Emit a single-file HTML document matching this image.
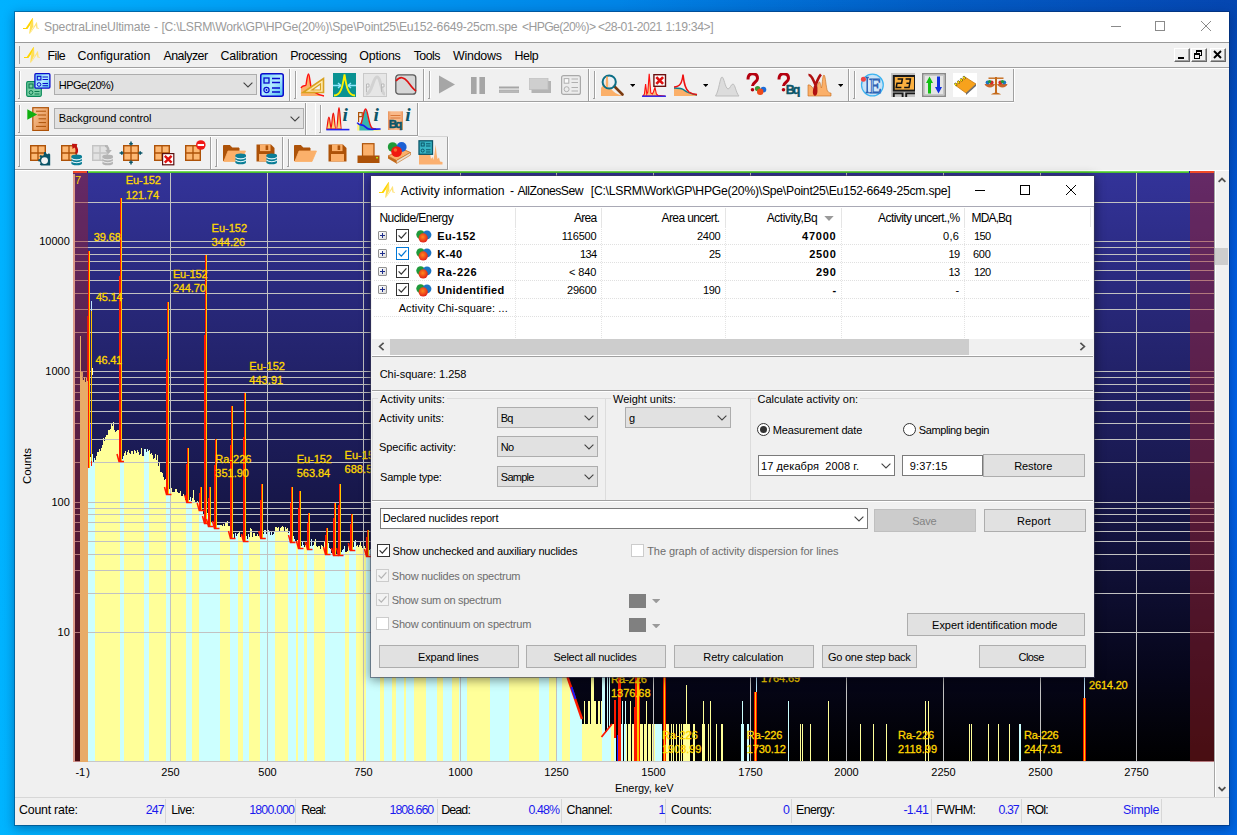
<!DOCTYPE html><html><head><meta charset="utf-8"><title>SpectraLineUltimate</title><style>
html,body{margin:0;padding:0;}
body{width:1237px;height:835px;overflow:hidden;position:relative;font-family:"Liberation Sans",sans-serif;
 background:linear-gradient(90deg,#00b2ff 0%,#009af2 25%,#0084e6 50%,#006cdc 75%,#005ce0 100%);}
.t{position:absolute;white-space:pre;line-height:1;}
.a{position:absolute;box-sizing:border-box;}
#win{position:absolute;left:15px;top:12px;width:1214px;height:813px;background:#f0f0f0;box-shadow:0 0 0 1px rgba(0,30,70,.38),0 3px 10px 1px rgba(0,20,70,.36);}
.btn{position:absolute;box-sizing:border-box;background:#e1e1e1;border:1px solid #adadad;}
.cmb{position:absolute;box-sizing:border-box;background:#e1e1e1;border:1px solid #adadad;}
.edit{position:absolute;box-sizing:border-box;background:#fff;border:1px solid #7a7a7a;}
.hl{position:absolute;height:1px;}
.vl{position:absolute;width:1px;}
</style></head><body>
<div class="a" style="left:0;top:0;width:1237px;height:835px;background:linear-gradient(180deg,rgba(0,0,0,0) 0%,rgba(0,40,80,0) 60%,rgba(0,200,255,.10) 100%)"></div>
<div class="a" style="left:0;top:0;width:1237px;height:835px;background:radial-gradient(ellipse 620px 260px at 100% 0%,rgba(12,40,110,.42),rgba(12,40,110,0) 100%)"></div>
<div class="a" style="left:1200px;top:250px;width:37px;height:330px;background:linear-gradient(180deg,rgba(0,110,255,0),rgba(0,110,255,.35) 50%,rgba(0,110,255,0))"></div>
<div id="win"></div>
<div class="a" style="left:15px;top:12px;width:1214px;height:30px;background:#fff"></div>
<div class="hl" style="left:15px;top:42px;width:1214px;background:#9a9a9a"></div>
<svg class="a" style="left:23px;top:18px;opacity:1" width="16" height="16" viewBox="0 0 16 16"><path d="M0 9.9 L2.8 9.9 L9.3 0.2 L10 0.2 L9.8 3.2 L4.4 10.9 L0 10.9Z" fill="#ffd400"/><path d="M10 0.2 L10.4 8.2 L6.7 15.8 L6.2 15.6 L7.4 5.8Z" fill="#ffdf55"/><path d="M6.7 15.8 L13.4 4.3 L14 4.3 L14.6 9.7 L16 9.9 L16 10.8 L13.4 10.6 L12.9 7.6 L7.6 15Z" fill="#ffe37a"/></svg>
<span class="t" style="left:44.1px;top:21px;font-size:12.2px;color:#9b9b9b;letter-spacing:-0.192px;">SpectraLineUltimate</span>
<span class="t" style="left:154.1px;top:21px;font-size:12.2px;color:#9b9b9b;letter-spacing:-0.362px;">-</span>
<span class="t" style="left:161.4px;top:21px;font-size:12.2px;color:#9b9b9b;letter-spacing:-0.261px;">[C:\LSRM\Work\GP\HPGe(20%)\Spe\Point25\Eu152-6649-25cm.spe</span>
<span class="t" style="left:521.9px;top:21px;font-size:12.2px;color:#9b9b9b;letter-spacing:-0.583px;">&lt;HPGe(20%)&gt;</span>
<span class="t" style="left:597.9px;top:21px;font-size:12.2px;color:#9b9b9b;letter-spacing:-0.502px;">&lt;28-01-2021</span>
<span class="t" style="left:665.4px;top:21px;font-size:12.2px;color:#9b9b9b;letter-spacing:-0.357px;">1:19:34&gt;]</span>
<div class="a" style="left:1111px;top:26px;width:10px;height:1px;background:#8a8a8a"></div>
<div class="a" style="left:1155px;top:21px;width:10px;height:10px;border:1px solid #8a8a8a"></div>
<svg class="a" style="left:1200px;top:20px" width="12" height="12" viewBox="0 0 12 12"><path d="M1 1 L11 11 M11 1 L1 11" stroke="#8a8a8a" stroke-width="1" fill="none"/></svg>
<div class="hl" style="left:15px;top:67px;width:1214px;background:#a0a0a0"></div>
<div class="hl" style="left:15px;top:68px;width:1214px;background:#fff"></div>
<div class="vl" style="left:19px;top:46px;height:18px;background:#a0a0a0"></div>
<svg class="a" style="left:23.5px;top:47px;opacity:1" width="16" height="16" viewBox="0 0 16 16"><path d="M0 9.9 L2.8 9.9 L9.3 0.2 L10 0.2 L9.8 3.2 L4.4 10.9 L0 10.9Z" fill="#ffd400"/><path d="M10 0.2 L10.4 8.2 L6.7 15.8 L6.2 15.6 L7.4 5.8Z" fill="#ffdf55"/><path d="M6.7 15.8 L13.4 4.3 L14 4.3 L14.6 9.7 L16 9.9 L16 10.8 L13.4 10.6 L12.9 7.6 L7.6 15Z" fill="#ffe37a"/></svg>
<span class="t" style="left:47.6px;top:49.5px;font-size:12.4px;color:#000;letter-spacing:-0.645px;">File</span>
<span class="t" style="left:77.6px;top:49.5px;font-size:12.4px;color:#000;letter-spacing:-0.081px;">Configuration</span>
<span class="t" style="left:163.4px;top:49.5px;font-size:12.4px;color:#000;letter-spacing:-0.493px;">Analyzer</span>
<span class="t" style="left:220.5px;top:49.5px;font-size:12.4px;color:#000;letter-spacing:-0.207px;">Calibration</span>
<span class="t" style="left:290.3px;top:49.5px;font-size:12.4px;color:#000;letter-spacing:-0.484px;">Processing</span>
<span class="t" style="left:359.3px;top:49.5px;font-size:12.4px;color:#000;letter-spacing:-0.205px;">Options</span>
<span class="t" style="left:413.7px;top:49.5px;font-size:12.4px;color:#000;letter-spacing:-0.569px;">Tools</span>
<span class="t" style="left:453px;top:49.5px;font-size:12.4px;color:#000;letter-spacing:-0.214px;">Windows</span>
<span class="t" style="left:514.6px;top:49.5px;font-size:12.4px;color:#000;letter-spacing:-0.475px;">Help</span>
<div class="a" style="left:1174px;top:48px;width:16px;height:14px;background:#f0f0f0;border-top:1px solid #fff;border-left:1px solid #fff;border-right:1px solid #696969;border-bottom:1px solid #696969;box-shadow:inset -1px -1px 0 #a0a0a0"></div><div class="a" style="left:1178px;top:57px;width:6px;height:2px;background:#000"></div>
<div class="a" style="left:1190.5px;top:48px;width:16px;height:14px;background:#f0f0f0;border-top:1px solid #fff;border-left:1px solid #fff;border-right:1px solid #696969;border-bottom:1px solid #696969;box-shadow:inset -1px -1px 0 #a0a0a0"></div><div class="a" style="left:1195.5px;top:50px;width:6px;height:6px;border:1px solid #000;border-top-width:2px"></div><div class="a" style="left:1193.5px;top:53px;width:6px;height:6px;border:1px solid #000;border-top-width:2px;background:#f0f0f0"></div>
<div class="a" style="left:1210px;top:48px;width:16px;height:14px;background:#f0f0f0;border-top:1px solid #fff;border-left:1px solid #fff;border-right:1px solid #696969;border-bottom:1px solid #696969;box-shadow:inset -1px -1px 0 #a0a0a0"></div><svg class="a" style="left:1213px;top:50px" width="9" height="9" viewBox="0 0 9 9"><path d="M1 1 L8 8 M8 1 L1 8" stroke="#000" stroke-width="1.9"/></svg>
<div class="hl" style="left:15px;top:797px;width:1214px;background:#d7d7d7"></div>
<div class="vl" style="left:165px;top:799px;height:24px;background:#d7d7d7"></div>
<div class="vl" style="left:295px;top:799px;height:24px;background:#d7d7d7"></div>
<div class="vl" style="left:436.5px;top:799px;height:24px;background:#d7d7d7"></div>
<div class="vl" style="left:560.5px;top:799px;height:24px;background:#d7d7d7"></div>
<div class="vl" style="left:665px;top:799px;height:24px;background:#d7d7d7"></div>
<div class="vl" style="left:790.5px;top:799px;height:24px;background:#d7d7d7"></div>
<div class="vl" style="left:930.5px;top:799px;height:24px;background:#d7d7d7"></div>
<div class="vl" style="left:1020.5px;top:799px;height:24px;background:#d7d7d7"></div>
<div class="vl" style="left:1160.5px;top:799px;height:24px;background:#d7d7d7"></div>
<span class="t" style="left:19px;top:804px;font-size:12.4px;color:#000;letter-spacing:-0.231px;">Count rate:</span>
<span class="t" style="left:145.7px;top:804px;font-size:12.4px;color:#1a1aee;letter-spacing:-0.896px;">247</span>
<span class="t" style="left:171.2px;top:804px;font-size:12.4px;color:#000;letter-spacing:-0.618px;">Live:</span>
<span class="t" style="left:249.3px;top:804px;font-size:12.4px;color:#1a1aee;letter-spacing:-0.864px;">1800.000</span>
<span class="t" style="left:301.2px;top:804px;font-size:12.4px;color:#000;letter-spacing:-0.889px;">Real:</span>
<span class="t" style="left:389.5px;top:804px;font-size:12.4px;color:#1a1aee;letter-spacing:-0.989px;">1808.660</span>
<span class="t" style="left:441.2px;top:804px;font-size:12.4px;color:#000;letter-spacing:-0.857px;">Dead:</span>
<span class="t" style="left:528.5px;top:804px;font-size:12.4px;color:#1a1aee;letter-spacing:-0.932px;">0.48%</span>
<span class="t" style="left:566.5px;top:804px;font-size:12.4px;color:#000;letter-spacing:-0.479px;">Channel:</span>
<span class="t" style="left:658.6px;top:804px;font-size:12.4px;color:#1a1aee;letter-spacing:-1.896px;">1</span>
<span class="t" style="left:671px;top:804px;font-size:12.4px;color:#000;letter-spacing:-0.276px;">Counts:</span>
<span class="t" style="left:783px;top:804px;font-size:12.4px;color:#1a1aee;letter-spacing:-0.896px;">0</span>
<span class="t" style="left:796px;top:804px;font-size:12.4px;color:#000;letter-spacing:-0.576px;">Energy:</span>
<span class="t" style="left:903.4px;top:804px;font-size:12.4px;color:#1a1aee;letter-spacing:-0.692px;">-1.41</span>
<span class="t" style="left:936.3px;top:804px;font-size:12.4px;color:#000;letter-spacing:-0.581px;">FWHM:</span>
<span class="t" style="left:998.5px;top:804px;font-size:12.4px;color:#1a1aee;letter-spacing:-0.958px;">0.37</span>
<span class="t" style="left:1026.6px;top:804px;font-size:12.4px;color:#000;letter-spacing:-1.097px;">ROI:</span>
<span class="t" style="left:1123px;top:804px;font-size:12.4px;color:#1a1aee;letter-spacing:-0.317px;">Simple</span>
<svg class="a" style="left:15px;top:170px" width="1214" height="627" viewBox="15 170 1214 627" shape-rendering="crispEdges">
<defs><linearGradient id="bg" x1="0" y1="0" x2="0" y2="1"><stop offset="0" stop-color="#333399"/><stop offset="0.55" stop-color="#17174a"/><stop offset="0.85" stop-color="#06061a"/><stop offset="1" stop-color="#000000"/></linearGradient>
<clipPath id="plot"><rect x="73" y="173" width="1141" height="589"/></clipPath></defs>
<rect x="15" y="170" width="1214" height="627" fill="#f0f0f0"/><rect x="15" y="170" width="1214" height="1" fill="#fff"/>
<rect x="73" y="173" width="1141" height="589" fill="url(#bg)"/>
<rect x="73" y="171" width="14" height="2" fill="#f04a28"/><rect x="87" y="171" width="1" height="2" fill="#1a1a90"/><rect x="88" y="171" width="1101" height="1" fill="#74dc58"/><rect x="88" y="172" width="1101" height="1" fill="#4cbc30"/><rect x="1189" y="171" width="1" height="2" fill="#1a1a90"/><rect x="1190" y="171" width="24" height="2" fill="#f04a28"/>
<path d="M88 762V462h1V762ZM89 762V459h1V762ZM90 762V457h1V762ZM91 762V459h1V762ZM92 762V454h1V762ZM93 762V462h1V762ZM94 762V458h1V762Z" fill="#ccffff"/>
<path d="M95 762V460h1V762ZM96 762V456h1V762ZM97 762V452h1V762ZM98 762V452h1V762ZM99 762V449h1V762ZM100 762V451h1V762ZM101 762V448h1V762ZM102 762V445h1V762ZM103 762V438h1V762ZM104 762V441h1V762ZM105 762V437h1V762ZM106 762V435h1V762ZM107 762V435h1V762ZM108 762V430h1V762ZM109 762V430h1V762ZM110 762V429h1V762ZM111 762V424h1V762ZM112 762V426h1V762ZM113 762V422h1V762ZM114 762V430h1V762ZM115 762V432h1V762ZM116 762V431h1V762ZM117 762V430h1V762ZM118 762V430h1V762ZM119 762V431h1V762Z" fill="#ffff99"/>
<path d="M120 762V441h1V762ZM121 762V456h1V762ZM122 762V459h1V762ZM123 762V456h1V762Z" fill="#ccffff"/>
<path d="M124 762V453h1V762ZM125 762V451h1V762ZM126 762V455h1V762ZM127 762V452h1V762ZM128 762V450h1V762ZM129 762V453h1V762ZM130 762V454h1V762ZM131 762V451h1V762ZM132 762V451h1V762ZM133 762V454h1V762ZM134 762V450h1V762ZM135 762V451h1V762ZM136 762V453h1V762ZM137 762V450h1V762ZM138 762V452h1V762ZM139 762V455h1V762ZM140 762V454h1V762ZM141 762V448h1V762ZM142 762V456h1V762ZM143 762V456h1V762Z" fill="#ffff99"/>
<path d="M144 762V449h1V762ZM145 762V449h1V762ZM146 762V452h1V762ZM147 762V449h1V762ZM148 762V451h1V762Z" fill="#ccffff"/>
<path d="M149 762V450h1V762ZM150 762V454h1V762ZM151 762V453h1V762ZM152 762V455h1V762ZM153 762V459h1V762ZM154 762V458h1V762ZM155 762V454h1V762ZM156 762V460h1V762ZM157 762V455h1V762ZM158 762V466h1V762ZM159 762V463h1V762ZM160 762V472h1V762ZM161 762V472h1V762ZM162 762V473h1V762ZM163 762V477h1V762ZM164 762V480h1V762ZM165 762V479h1V762Z" fill="#ffff99"/>
<path d="M166 762V486h1V762ZM167 762V487h1V762ZM168 762V489h1V762ZM169 762V489h1V762ZM170 762V483h1V762Z" fill="#ccffff"/>
<path d="M171 762V488h1V762ZM172 762V492h1V762ZM173 762V492h1V762ZM174 762V492h1V762ZM175 762V489h1V762ZM176 762V489h1V762ZM177 762V492h1V762ZM178 762V493h1V762ZM179 762V493h1V762ZM180 762V491h1V762ZM181 762V496h1V762ZM182 762V496h1V762ZM183 762V494h1V762ZM184 762V496h1V762ZM185 762V500h1V762Z" fill="#ffff99"/>
<path d="M186 762V498h1V762ZM187 762V499h1V762ZM188 762V496h1V762ZM189 762V500h1V762ZM190 762V497h1V762ZM191 762V501h1V762Z" fill="#ccffff"/>
<path d="M192 762V498h1V762ZM193 762V490h1V762ZM194 762V500h1V762ZM195 762V503h1V762ZM196 762V503h1V762ZM197 762V501h1V762ZM198 762V502h1V762Z" fill="#ffff99"/>
<path d="M199 762V505h1V762ZM200 762V505h1V762ZM201 762V509h1V762ZM202 762V510h1V762ZM203 762V514h1V762ZM204 762V517h1V762ZM205 762V517h1V762ZM206 762V517h1V762ZM207 762V513h1V762ZM208 762V519h1V762ZM209 762V522h1V762ZM210 762V521h1V762ZM211 762V523h1V762ZM212 762V521h1V762ZM213 762V522h1V762ZM214 762V525h1V762ZM215 762V524h1V762ZM216 762V526h1V762ZM217 762V525h1V762ZM218 762V525h1V762ZM219 762V525h1V762Z" fill="#ccffff"/>
<path d="M220 762V525h1V762ZM221 762V525h1V762ZM222 762V526h1V762ZM223 762V524h1V762ZM224 762V526h1V762ZM225 762V522h1V762ZM226 762V522h1V762ZM227 762V521h1V762ZM228 762V526h1V762ZM229 762V526h1V762Z" fill="#ffff99"/>
<path d="M230 762V531h1V762ZM231 762V535h1V762ZM232 762V532h1V762ZM233 762V534h1V762ZM234 762V539h1V762ZM235 762V533h1V762ZM236 762V536h1V762ZM237 762V534h1V762Z" fill="#ccffff"/>
<path d="M238 762V533h1V762ZM239 762V532h1V762ZM240 762V537h1V762ZM241 762V534h1V762ZM242 762V539h1V762Z" fill="#ffff99"/>
<path d="M243 762V534h1V762ZM244 762V534h1V762ZM245 762V535h1V762ZM246 762V536h1V762ZM247 762V539h1V762ZM248 762V534h1V762Z" fill="#ccffff"/>
<path d="M249 762V537h1V762ZM250 762V528h1V762ZM251 762V529h1V762ZM252 762V537h1V762ZM253 762V533h1V762ZM254 762V533h1V762ZM255 762V536h1V762ZM256 762V536h1V762ZM257 762V534h1V762ZM258 762V536h1V762ZM259 762V532h1V762Z" fill="#ffff99"/>
<path d="M260 762V532h1V762ZM261 762V533h1V762ZM262 762V536h1V762ZM263 762V534h1V762ZM264 762V530h1V762ZM265 762V530h1V762ZM266 762V534h1V762ZM267 762V533h1V762ZM268 762V530h1V762ZM269 762V532h1V762ZM270 762V535h1V762ZM271 762V532h1V762ZM272 762V535h1V762ZM273 762V534h1V762ZM274 762V532h1V762Z" fill="#ccffff"/>
<path d="M275 762V527h1V762ZM276 762V527h1V762ZM277 762V528h1V762ZM278 762V527h1V762ZM279 762V532h1V762ZM280 762V528h1V762ZM281 762V527h1V762ZM282 762V526h1V762ZM283 762V527h1V762ZM284 762V532h1V762ZM285 762V527h1V762ZM286 762V529h1V762ZM287 762V528h1V762Z" fill="#ffff99"/>
<path d="M288 762V533h1V762ZM289 762V532h1V762ZM290 762V532h1V762ZM291 762V534h1V762ZM292 762V531h1V762ZM293 762V536h1V762ZM294 762V539h1V762ZM295 762V541h1V762Z" fill="#ccffff"/>
<path d="M296 762V543h1V762ZM297 762V540h1V762Z" fill="#ffff99"/>
<path d="M298 762V540h1V762ZM299 762V538h1V762ZM300 762V546h1V762ZM301 762V546h1V762ZM302 762V542h1V762ZM303 762V545h1V762Z" fill="#ccffff"/>
<path d="M304 762V547h1V762ZM305 762V545h1V762ZM306 762V546h1V762Z" fill="#ffff99"/>
<path d="M307 762V540h1V762ZM308 762V537h1V762ZM309 762V545h1V762ZM310 762V546h1V762ZM311 762V539h1V762ZM312 762V546h1V762ZM313 762V545h1V762Z" fill="#ccffff"/>
<path d="M314 762V541h1V762ZM315 762V539h1V762ZM316 762V546h1V762ZM317 762V547h1V762ZM318 762V546h1V762ZM319 762V546h1V762ZM320 762V549h1V762ZM321 762V545h1V762ZM322 762V546h1V762ZM323 762V547h1V762ZM324 762V542h1V762Z" fill="#ffff99"/>
<path d="M325 762V550h1V762ZM326 762V551h1V762ZM327 762V550h1V762ZM328 762V543h1V762ZM329 762V548h1V762ZM330 762V549h1V762ZM331 762V553h1V762ZM332 762V550h1V762ZM333 762V549h1V762ZM334 762V549h1V762ZM335 762V548h1V762ZM336 762V554h1V762ZM337 762V554h1V762ZM338 762V554h1V762ZM339 762V550h1V762ZM340 762V550h1V762ZM341 762V552h1V762ZM342 762V550h1V762ZM343 762V549h1V762ZM344 762V546h1V762Z" fill="#ccffff"/>
<path d="M345 762V552h1V762ZM346 762V552h1V762ZM347 762V551h1V762ZM348 762V546h1V762Z" fill="#ffff99"/>
<path d="M349 762V550h1V762ZM350 762V545h1V762ZM351 762V541h1V762ZM352 762V547h1V762ZM353 762V547h1V762ZM354 762V541h1V762ZM355 762V540h1V762Z" fill="#ccffff"/>
<path d="M356 762V546h1V762ZM357 762V545h1V762ZM358 762V547h1V762ZM359 762V545h1V762ZM360 762V542h1V762ZM361 762V546h1V762ZM362 762V548h1V762ZM363 762V544h1V762ZM364 762V546h1V762ZM365 762V548h1V762Z" fill="#ffff99"/>
<path d="M366 762V552h1V762ZM367 762V549h1V762ZM368 762V550h1V762ZM369 762V550h1V762ZM370 762V549h1V762ZM371 762V554h1V762ZM372 762V549h1V762ZM373 762V555h1V762ZM374 762V549h1V762ZM375 762V548h1V762ZM376 762V548h1V762ZM377 762V549h1V762ZM378 762V554h1V762ZM379 762V550h1V762Z" fill="#ccffff"/>
<path d="M380 762V551h1V762ZM381 762V547h1V762ZM382 762V555h1V762ZM383 762V552h1V762Z" fill="#ffff99"/>
<path d="M384 762V555h1V762ZM385 762V551h1V762ZM386 762V552h1V762ZM387 762V556h1V762ZM388 762V554h1V762ZM389 762V555h1V762ZM390 762V554h1V762ZM391 762V550h1V762Z" fill="#ccffff"/>
<path d="M392 762V557h1V762ZM393 762V557h1V762ZM394 762V550h1V762ZM395 762V555h1V762Z" fill="#ffff99"/>
<path d="M396 762V559h1V762ZM397 762V557h1V762ZM398 762V556h1V762ZM399 762V553h1V762ZM400 762V554h1V762ZM401 762V558h1V762ZM402 762V554h1V762ZM403 762V558h1V762Z" fill="#ccffff"/>
<path d="M404 762V550h1V762ZM405 762V558h1V762Z" fill="#ffff99"/>
<path d="M406 762V556h1V762ZM407 762V555h1V762ZM408 762V558h1V762ZM409 762V560h1V762ZM410 762V559h1V762ZM411 762V557h1V762ZM412 762V561h1V762ZM413 762V556h1V762Z" fill="#ccffff"/>
<path d="M414 762V561h1V762ZM415 762V559h1V762ZM416 762V564h1V762ZM417 762V557h1V762ZM418 762V560h1V762ZM419 762V559h1V762ZM420 762V563h1V762ZM421 762V560h1V762ZM422 762V561h1V762ZM423 762V560h1V762ZM424 762V564h1V762ZM425 762V566h1V762Z" fill="#ffff99"/>
<path d="M426 762V561h1V762ZM427 762V563h1V762ZM428 762V567h1V762ZM429 762V563h1V762ZM430 762V568h1V762ZM431 762V557h1V762ZM432 762V568h1V762ZM433 762V567h1V762ZM434 762V568h1V762ZM435 762V563h1V762ZM436 762V562h1V762Z" fill="#ccffff"/>
<path d="M437 762V565h1V762ZM438 762V565h1V762ZM439 762V563h1V762ZM440 762V566h1V762ZM441 762V564h1V762ZM442 762V565h1V762Z" fill="#ffff99"/>
<path d="M443 762V570h1V762ZM444 762V563h1V762ZM445 762V567h1V762ZM446 762V566h1V762ZM447 762V567h1V762ZM448 762V571h1V762ZM449 762V563h1V762ZM450 762V572h1V762ZM451 762V571h1V762Z" fill="#ccffff"/>
<path d="M452 762V569h1V762ZM453 762V573h1V762ZM454 762V569h1V762ZM455 762V569h1V762ZM456 762V567h1V762ZM457 762V574h1V762ZM458 762V571h1V762Z" fill="#ffff99"/>
<path d="M459 762V571h1V762ZM460 762V575h1V762ZM461 762V570h1V762ZM462 762V572h1V762ZM463 762V570h1V762ZM464 762V575h1V762ZM465 762V575h1V762ZM466 762V572h1V762Z" fill="#ccffff"/>
<path d="M467 762V573h1V762ZM468 762V571h1V762ZM469 762V576h1V762ZM470 762V567h1V762ZM471 762V573h1V762ZM472 762V578h1V762ZM473 762V571h1V762ZM474 762V575h1V762ZM475 762V575h1V762ZM476 762V575h1V762ZM477 762V578h1V762ZM478 762V579h1V762ZM479 762V574h1V762ZM480 762V576h1V762ZM481 762V576h1V762ZM482 762V575h1V762ZM483 762V576h1V762ZM484 762V581h1V762ZM485 762V577h1V762ZM486 762V582h1V762ZM487 762V577h1V762ZM488 762V580h1V762ZM489 762V576h1V762Z" fill="#ffff99"/>
<path d="M490 762V582h1V762ZM491 762V579h1V762ZM492 762V577h1V762ZM493 762V584h1V762ZM494 762V584h1V762ZM495 762V584h1V762ZM496 762V579h1V762ZM497 762V580h1V762ZM498 762V583h1V762ZM499 762V581h1V762ZM500 762V580h1V762ZM501 762V583h1V762ZM502 762V577h1V762ZM503 762V584h1V762ZM504 762V582h1V762ZM505 762V586h1V762ZM506 762V577h1V762ZM507 762V584h1V762ZM508 762V581h1V762Z" fill="#ccffff"/>
<path d="M509 762V586h1V762ZM510 762V583h1V762ZM511 762V588h1V762ZM512 762V586h1V762ZM513 762V585h1V762ZM514 762V589h1V762ZM515 762V584h1V762ZM516 762V578h1V762ZM517 762V586h1V762ZM518 762V586h1V762ZM519 762V587h1V762ZM520 762V584h1V762ZM521 762V589h1V762ZM522 762V585h1V762ZM523 762V587h1V762ZM524 762V586h1V762ZM525 762V589h1V762ZM526 762V586h1V762ZM527 762V591h1V762ZM528 762V587h1V762ZM529 762V593h1V762ZM530 762V583h1V762ZM531 762V589h1V762ZM532 762V591h1V762ZM533 762V588h1V762ZM534 762V589h1V762ZM535 762V594h1V762ZM536 762V589h1V762ZM537 762V591h1V762ZM538 762V591h1V762Z" fill="#ffff99"/>
<path d="M539 762V590h1V762ZM540 762V591h1V762ZM541 762V588h1V762ZM542 762V590h1V762ZM543 762V594h1V762ZM544 762V592h1V762ZM545 762V594h1V762ZM546 762V595h1V762ZM547 762V589h1V762ZM548 762V595h1V762Z" fill="#ccffff"/>
<path d="M549 762V597h1V762ZM550 762V595h1V762ZM551 762V593h1V762ZM552 762V591h1V762ZM553 762V591h1V762ZM554 762V593h1V762ZM555 762V598h1V762ZM556 762V593h1V762Z" fill="#ffff99"/>
<path d="M557 762V596h1V762ZM558 762V595h1V762ZM559 762V601h1V762ZM560 762V600h1V762ZM561 762V601h1V762Z" fill="#ccffff"/>
<path d="M562 762V601h1V762ZM563 762V596h1V762ZM564 762V598h1V762ZM565 762V601h1V762ZM566 762V640h1V762ZM567 762V678h1V762ZM568 762V681h1V762ZM569 762V684h1V762Z" fill="#ffff99"/>
<path d="M570 762V687h1V762ZM571 762V690h1V762ZM572 762V692h1V762ZM573 762V695h1V762ZM574 762V698h1V762ZM575 762V701h1V762ZM576 762V704h1V762ZM577 762V706h1V762ZM578 762V709h1V762ZM579 762V712h1V762ZM580 762V715h1V762ZM581 762V718h1V762Z" fill="#ccffff"/>
<path d="M582 762V724h1V762ZM583 762V724h1V762ZM584 762V701h1V762ZM585 762V724h1V762ZM586 762V724h1V762ZM587 762V724h1V762ZM588 762V701h1V762ZM589 762V701h1V762ZM590 762V724h1V762ZM591 762V677h1V762ZM592 762V677h1V762ZM593 762V677h1V762ZM594 762V701h1V762ZM595 762V701h1V762ZM596 762V724h1V762ZM597 762V724h1V762ZM598 762V701h1V762ZM599 762V701h1V762ZM600 762V724h1V762ZM601 762V701h1V762Z" fill="#ffff99"/>
<path d="M602 762V677h1V762ZM603 762V677h1V762ZM604 762V677h1V762ZM605 762V733h1V762ZM606 762V732h1V762ZM607 762V677h1V762ZM608 762V729h1V762ZM609 762V677h1V762ZM610 762V726h1V762Z" fill="#ccffff"/>
<path d="M611 762V724h1V762ZM612 762V724h1V762ZM613 762V724h1V762Z" fill="#ffff99"/>
<path d="M614 762V724h1V762ZM615 762V724h1V762ZM616 762V762h1V762Z" fill="#ccffff"/>
<rect x="80" y="386" width="8" height="376" fill="#ffff99"/><rect x="80" y="336" width="1" height="60" fill="#ffff99"/><rect x="81" y="372" width="2" height="20" fill="#ffff99"/>
<path d="M626 762V724h1V762ZM628 762V724h1V762ZM629 762V724h1V762ZM630 762V701h1V762ZM632 762V724h1V762ZM633 762V724h1V762ZM634 762V724h1V762ZM636 762V724h1V762ZM637 762V724h1V762ZM638 762V724h1V762ZM640 762V724h1V762ZM641 762V724h1V762ZM642 762V724h1V762ZM644 762V724h1V762ZM645 762V724h1V762ZM646 762V701h1V762ZM648 762V724h1V762ZM649 762V724h1V762ZM650 762V724h1V762ZM652 762V724h1V762ZM653 762V724h1V762ZM654 762V724h1V762ZM666 762V724h1V762ZM667 762V724h1V762ZM668 762V724h1V762ZM671 762V724h1V762ZM673 762V724h1V762ZM676 762V724h1V762ZM679 762V724h1V762ZM681 762V724h1V762ZM683 762V724h1V762ZM684 762V724h1V762ZM685 762V724h1V762ZM686 762V685h1V762ZM687 762V724h1V762ZM688 762V724h1V762ZM689 762V724h1V762ZM693 762V724h1V762ZM694 762V724h1V762ZM702 762V724h1V762ZM703 762V701h1V762ZM704 762V724h1V762ZM708 762V724h1V762ZM710 762V701h1V762ZM716 762V724h1V762ZM721 762V724h1V762ZM722 762V724h1V762ZM800 762V724h1V762ZM802 762V724h1V762ZM810 762V724h1V762ZM828 762V701h1V762ZM860 762V724h1V762ZM873 762V724h1V762ZM886 762V724h1V762ZM925 762V701h1V762ZM928 762V701h1V762ZM969 762V724h1V762ZM971 762V724h1V762ZM988 762V724h1V762ZM998 762V724h1V762ZM1009 762V724h1V762Z" fill="#ffff99"/><path d="M620 762V724h1V762ZM621 762V724h1V762ZM622 762V701h1V762ZM624 762V724h1V762ZM625 762V701h1V762ZM655 762V724h1V762ZM656 762V724h1V762ZM657 762V724h1V762ZM658 762V724h1V762ZM659 762V724h1V762ZM660 762V724h1V762ZM661 762V724h1V762ZM741 762V724h1V762ZM742 762V701h1V762ZM743 762V724h1V762ZM747 762V724h1V762ZM748 762V724h1V762ZM788 762V701h1V762ZM1019 762V724h1V762ZM1020 762V724h1V762Z" fill="#ccffff"/>
<path d="M73 632.5H1214M73 593.5H1214M73 570.5H1214M73 554.5H1214M73 541.5H1214M73 531.5H1214M73 522.5H1214M73 514.5H1214M73 508.5H1214M73 502.5H1214M73 462.5H1214M73 439.5H1214M73 423.5H1214M73 411.5H1214M73 400.5H1214M73 392.5H1214M73 384.5H1214M73 377.5H1214M73 371.5H1214M73 332.5H1214M73 309.5H1214M73 293.5H1214M73 280.5H1214M73 270.5H1214M73 261.5H1214M73 254.5H1214M73 247.5H1214M73 241.5H1214M73 202.5H1214M170.5 173V762M267.5 173V762M363.5 173V762M460.5 173V762M556.5 173V762M653.5 173V762M750.5 173V762M846.5 173V762M943.5 173V762M1040.5 173V762M1136.5 173V762" stroke="#c2c2c2" stroke-width="1" fill="none"/>
<rect x="88" y="251" width="1" height="217" fill="#ff1a00"/><rect x="87" y="316" width="1" height="152" fill="#ff1a00"/><rect x="89" y="251" width="1" height="217" fill="#ffc800"/>
<rect x="120" y="198" width="1" height="263" fill="#ff1a00"/><rect x="119" y="276" width="1" height="185" fill="#ff1a00"/><rect x="121" y="198" width="1" height="263" fill="#ffc800"/>
<rect x="167" y="302" width="1" height="192" fill="#ff1a00"/><rect x="166" y="359" width="1" height="135" fill="#ff1a00"/><rect x="168" y="302" width="1" height="192" fill="#ffc800"/>
<rect x="205" y="255" width="1" height="268" fill="#ff1a00"/><rect x="204" y="335" width="1" height="188" fill="#ff1a00"/><rect x="206" y="255" width="1" height="268" fill="#ffc800"/>
<rect x="231" y="406" width="1" height="132" fill="#ff1a00"/><rect x="230" y="445" width="1" height="93" fill="#ff1a00"/><rect x="232" y="406" width="1" height="132" fill="#ffc800"/>
<rect x="244" y="393" width="1" height="148" fill="#ff1a00"/><rect x="243" y="437" width="1" height="104" fill="#ff1a00"/><rect x="245" y="393" width="1" height="148" fill="#ffc800"/>
<rect x="187" y="448" width="1" height="54" fill="#ff1a00"/><rect x="186" y="464" width="1" height="38" fill="#ff1a00"/><rect x="188" y="448" width="1" height="54" fill="#ffc800"/>
<rect x="215" y="439" width="1" height="89" fill="#ff1a00"/><rect x="214" y="465" width="1" height="63" fill="#ff1a00"/><rect x="216" y="439" width="1" height="89" fill="#ffc800"/>
<rect x="200" y="487" width="1" height="23" fill="#ff1a00"/><rect x="199" y="493" width="1" height="17" fill="#ff1a00"/><rect x="201" y="487" width="1" height="23" fill="#ffc800"/>
<rect x="209" y="487" width="1" height="39" fill="#ff1a00"/><rect x="208" y="498" width="1" height="28" fill="#ff1a00"/><rect x="210" y="487" width="1" height="39" fill="#ffc800"/>
<rect x="261" y="484" width="1" height="54" fill="#ff1a00"/><rect x="260" y="500" width="1" height="38" fill="#ff1a00"/><rect x="262" y="484" width="1" height="54" fill="#ffc800"/>
<rect x="291" y="487" width="1" height="55" fill="#ff1a00"/><rect x="290" y="503" width="1" height="39" fill="#ff1a00"/><rect x="292" y="487" width="1" height="55" fill="#ffc800"/>
<rect x="299" y="491" width="1" height="57" fill="#ff1a00"/><rect x="298" y="508" width="1" height="40" fill="#ff1a00"/><rect x="300" y="491" width="1" height="57" fill="#ffc800"/>
<rect x="308" y="513" width="1" height="36" fill="#ff1a00"/><rect x="307" y="523" width="1" height="26" fill="#ff1a00"/><rect x="309" y="513" width="1" height="36" fill="#ffc800"/>
<rect x="326" y="528" width="1" height="26" fill="#ff1a00"/><rect x="325" y="535" width="1" height="19" fill="#ff1a00"/><rect x="327" y="528" width="1" height="26" fill="#ffc800"/>
<rect x="334" y="503" width="1" height="52" fill="#ff1a00"/><rect x="333" y="518" width="1" height="37" fill="#ff1a00"/><rect x="335" y="503" width="1" height="52" fill="#ffc800"/>
<rect x="339" y="484" width="1" height="71" fill="#ff1a00"/><rect x="338" y="505" width="1" height="50" fill="#ff1a00"/><rect x="340" y="484" width="1" height="71" fill="#ffc800"/>
<rect x="351" y="514" width="1" height="36" fill="#ff1a00"/><rect x="350" y="524" width="1" height="26" fill="#ff1a00"/><rect x="352" y="514" width="1" height="36" fill="#ffc800"/>
<rect x="367" y="530" width="1" height="26" fill="#ff1a00"/><rect x="366" y="537" width="1" height="19" fill="#ff1a00"/><rect x="368" y="530" width="1" height="26" fill="#ffc800"/>
<rect x="90.6" y="309" width="1.6" height="157" fill="#ff1a00"/><rect x="91" y="301" width="1" height="10" fill="#bfe8ff"/><rect x="91" y="311" width="1" height="150" fill="#ffc400"/><rect x="92" y="368" width="1.4" height="7" fill="#ffffe0"/><rect x="90" y="424" width="1" height="30" fill="#2a2aff"/>
<path d="M117.0 454L119.0 461.5H124.0" stroke="#ff1a00" stroke-width="1.5" fill="none" shape-rendering="auto"/>
<path d="M164.5 487L166.5 494.5H171.5" stroke="#ff1a00" stroke-width="1.5" fill="none" shape-rendering="auto"/>
<path d="M202.5 516L204.5 523.5H209.5" stroke="#ff1a00" stroke-width="1.5" fill="none" shape-rendering="auto"/>
<path d="M228.5 531L230.5 538.5H235.5" stroke="#ff1a00" stroke-width="1.5" fill="none" shape-rendering="auto"/>
<path d="M241.5 534L243.5 541.5H248.5" stroke="#ff1a00" stroke-width="1.5" fill="none" shape-rendering="auto"/>
<path d="M184.8 495L186.8 502.5H191.8" stroke="#ff1a00" stroke-width="1.5" fill="none" shape-rendering="auto"/>
<path d="M212.5 521L214.5 528.5H219.5" stroke="#ff1a00" stroke-width="1.5" fill="none" shape-rendering="auto"/>
<path d="M197.2 503L199.2 510.5H204.2" stroke="#ff1a00" stroke-width="1.5" fill="none" shape-rendering="auto"/>
<path d="M206.5 519L208.5 526.5H213.5" stroke="#ff1a00" stroke-width="1.5" fill="none" shape-rendering="auto"/>
<path d="M258.8 531L260.8 538.5H265.8" stroke="#ff1a00" stroke-width="1.5" fill="none" shape-rendering="auto"/>
<path d="M288.5 535L290.5 542.5H295.5" stroke="#ff1a00" stroke-width="1.5" fill="none" shape-rendering="auto"/>
<path d="M296.5 541L298.5 548.5H303.5" stroke="#ff1a00" stroke-width="1.5" fill="none" shape-rendering="auto"/>
<path d="M305.5 542L307.5 549.5H312.5" stroke="#ff1a00" stroke-width="1.5" fill="none" shape-rendering="auto"/>
<path d="M323.5 547L325.5 554.5H330.5" stroke="#ff1a00" stroke-width="1.5" fill="none" shape-rendering="auto"/>
<path d="M331.5 548L333.5 555.5H338.5" stroke="#ff1a00" stroke-width="1.5" fill="none" shape-rendering="auto"/>
<path d="M336.5 548L338.5 555.5H343.5" stroke="#ff1a00" stroke-width="1.5" fill="none" shape-rendering="auto"/>
<path d="M348.3 543L350.3 550.5H355.3" stroke="#ff1a00" stroke-width="1.5" fill="none" shape-rendering="auto"/>
<path d="M364.5 549L366.5 556.5H371.5" stroke="#ff1a00" stroke-width="1.5" fill="none" shape-rendering="auto"/>
<path d="M567.5 677L582 719" stroke="#ff1a00" stroke-width="2.4" shape-rendering="auto"/>
<path d="M571.5 687L575.5 699" stroke="#1a1aff" stroke-width="2" shape-rendering="auto"/>
<path d="M601.5 737L612 724" stroke="#ff1a00" stroke-width="1.8" shape-rendering="auto"/>
<rect x="613.5" y="700" width="2.5" height="38" fill="#ff1a00"/><rect x="616.5" y="735" width="1.5" height="27" fill="#1a1aff"/><rect x="618" y="677" width="3" height="85" fill="#ff1a00"/>
<rect x="635" y="677" width="5" height="85" fill="#ff1a00"/><rect x="637" y="677" width="2" height="85" fill="#ffc800"/>
<rect x="634" y="707" width="1" height="55" fill="#ff1a00"/>
<rect x="663" y="677" width="3" height="85" fill="#ff1a00"/><rect x="664" y="677" width="1" height="85" fill="#ffc800"/>
<rect x="754" y="692" width="3" height="70" fill="#ff1a00"/><rect x="755" y="692" width="1" height="70" fill="#ffc800"/>
<rect x="756" y="677" width="1" height="15" fill="#bfe8ff"/>
<rect x="1083" y="698" width="3" height="64" fill="#ff1a00"/><rect x="1084" y="698" width="1" height="64" fill="#ffc800"/>
<rect x="1084" y="677" width="1" height="21" fill="#bfe8ff"/>
<path d="M73 761.5H1214" stroke="#c8c8c8" stroke-width="1"/>
<rect x="73" y="173" width="15" height="589" fill="rgba(162,31,40,0.45)"/>
<rect x="80" y="390" width="8" height="372" fill="#e8ab68"/><rect x="80" y="336" width="1" height="60" fill="#e8ab68"/><path d="M81 376h1v4h2v-3h1v5h1v-4h1v3h1v12h-7z" fill="#e8ab68"/>
<rect x="73" y="174" width="2" height="588" fill="#dc9a8a"/>
<rect x="1190" y="173" width="24" height="589" fill="rgba(162,31,40,0.45)"/>
</svg>
<span class="t" style="left:75px;top:175px;font-size:11px;color:#ffd700;">7</span>
<span class="t" style="left:125.7px;top:175px;font-size:11px;color:#ffd700;letter-spacing:-0.057px;-webkit-text-stroke:0.3px #ffd700;">Eu-152</span><span class="t" style="left:125.7px;top:190px;font-size:11px;color:#ffd700;letter-spacing:-0.057px;-webkit-text-stroke:0.3px #ffd700;">121.74</span>
<span class="t" style="left:93.7px;top:232px;font-size:11px;color:#ffd700;letter-spacing:-0.085px;-webkit-text-stroke:0.3px #ffd700;">39.68</span>
<span class="t" style="left:211.6px;top:223px;font-size:11px;color:#ffd700;letter-spacing:-0.007px;-webkit-text-stroke:0.3px #ffd700;">Eu-152</span><span class="t" style="left:211.6px;top:237px;font-size:11px;color:#ffd700;letter-spacing:-0.007px;-webkit-text-stroke:0.3px #ffd700;">344.26</span>
<span class="t" style="left:172.9px;top:269px;font-size:11px;color:#ffd700;letter-spacing:-0.140px;-webkit-text-stroke:0.3px #ffd700;">Eu-152</span><span class="t" style="left:172.9px;top:283px;font-size:11px;color:#ffd700;letter-spacing:-0.140px;-webkit-text-stroke:0.3px #ffd700;">244.70</span>
<span class="t" style="left:95.9px;top:292px;font-size:11px;color:#ffd700;letter-spacing:-0.185px;-webkit-text-stroke:0.3px #ffd700;">45.14</span>
<span class="t" style="left:95.6px;top:355px;font-size:11px;color:#ffd700;letter-spacing:-0.225px;-webkit-text-stroke:0.3px #ffd700;">46.41</span>
<span class="t" style="left:249.3px;top:361px;font-size:11px;color:#ffd700;letter-spacing:0.043px;-webkit-text-stroke:0.3px #ffd700;">Eu-152</span><span class="t" style="left:249.3px;top:375px;font-size:11px;color:#ffd700;letter-spacing:0.043px;-webkit-text-stroke:0.3px #ffd700;">443.91</span>
<span class="t" style="left:215.3px;top:454px;font-size:11px;color:#ffd700;letter-spacing:0.010px;-webkit-text-stroke:0.3px #ffd700;">Ra-226</span><span class="t" style="left:215.3px;top:468px;font-size:11px;color:#ffd700;letter-spacing:0.010px;-webkit-text-stroke:0.3px #ffd700;">351.90</span>
<span class="t" style="left:296.8px;top:454px;font-size:11px;color:#ffd700;letter-spacing:-0.074px;-webkit-text-stroke:0.3px #ffd700;">Eu-152</span><span class="t" style="left:296.8px;top:468px;font-size:11px;color:#ffd700;letter-spacing:-0.074px;-webkit-text-stroke:0.3px #ffd700;">563.84</span>
<span class="t" style="left:344.5px;top:450px;font-size:11px;color:#ffd700;letter-spacing:0.060px;-webkit-text-stroke:0.3px #ffd700;">Eu-152</span><span class="t" style="left:344.5px;top:464px;font-size:11px;color:#ffd700;letter-spacing:0.060px;-webkit-text-stroke:0.3px #ffd700;">688.50</span>
<span class="t" style="left:611px;top:674px;font-size:11px;color:#ffd700;letter-spacing:-0.037px;-webkit-text-stroke:0.3px #ffd700;">Ra-226</span><span class="t" style="left:611px;top:688px;font-size:11px;color:#ffd700;letter-spacing:-0.037px;-webkit-text-stroke:0.3px #ffd700;">1376.68</span>
<span class="t" style="left:761px;top:673px;font-size:11px;color:#ffd700;letter-spacing:-0.108px;-webkit-text-stroke:0.3px #ffd700;">1764.69</span>
<span class="t" style="left:1089px;top:680px;font-size:11px;color:#ffd700;letter-spacing:-0.180px;-webkit-text-stroke:0.3px #ffd700;">2614.20</span>
<span class="t" style="left:661.9px;top:730px;font-size:11px;color:#ffd700;letter-spacing:-0.037px;-webkit-text-stroke:0.3px #ffd700;">Ra-226</span><span class="t" style="left:661.9px;top:744px;font-size:11px;color:#ffd700;letter-spacing:-0.037px;-webkit-text-stroke:0.3px #ffd700;">1908.99</span>
<span class="t" style="left:746.8px;top:730px;font-size:11px;color:#ffd700;letter-spacing:-0.108px;-webkit-text-stroke:0.3px #ffd700;">Ra-226</span><span class="t" style="left:746.8px;top:744px;font-size:11px;color:#ffd700;letter-spacing:-0.108px;-webkit-text-stroke:0.3px #ffd700;">1730.12</span>
<span class="t" style="left:898px;top:730px;font-size:11px;color:#ffd700;letter-spacing:0.023px;-webkit-text-stroke:0.3px #ffd700;">Ra-226</span><span class="t" style="left:898px;top:744px;font-size:11px;color:#ffd700;letter-spacing:0.023px;-webkit-text-stroke:0.3px #ffd700;">2118.99</span>
<span class="t" style="left:1024px;top:730px;font-size:11px;color:#ffd700;letter-spacing:-0.280px;-webkit-text-stroke:0.3px #ffd700;">Ra-226</span><span class="t" style="left:1024px;top:744px;font-size:11px;color:#ffd700;letter-spacing:-0.280px;-webkit-text-stroke:0.3px #ffd700;">2447.31</span>
<span class="t" style="left:39.21484375px;top:236px;font-size:11px;color:#000;">10000</span>
<span class="t" style="left:45.331875px;top:366px;font-size:11px;color:#000;">1000</span>
<span class="t" style="left:51.44890624999999px;top:497px;font-size:11px;color:#000;">100</span>
<span class="t" style="left:57.5659375px;top:627px;font-size:11px;color:#000;">10</span>
<span class="t" style="left:22px;top:483.5px;font-size:11.5px;color:#000;transform:rotate(-90deg);transform-origin:0 0;letter-spacing:-0.1px">Counts</span>
<span class="t" style="left:75.4px;top:767px;font-size:11px;color:#000;">-1</span><span class="t" style="left:86.3px;top:767px;font-size:11px;color:#000;">)</span>
<span class="t" style="left:161.324453125px;top:767px;font-size:11px;color:#000;">250</span>
<span class="t" style="left:258.324453125px;top:767px;font-size:11px;color:#000;">500</span>
<span class="t" style="left:354.324453125px;top:767px;font-size:11px;color:#000;">750</span>
<span class="t" style="left:448.2659375px;top:767px;font-size:11px;color:#000;">1000</span>
<span class="t" style="left:544.2659375px;top:767px;font-size:11px;color:#000;">1250</span>
<span class="t" style="left:641.2659375px;top:767px;font-size:11px;color:#000;">1500</span>
<span class="t" style="left:738.2659375px;top:767px;font-size:11px;color:#000;">1750</span>
<span class="t" style="left:834.2659375px;top:767px;font-size:11px;color:#000;">2000</span>
<span class="t" style="left:931.2659375px;top:767px;font-size:11px;color:#000;">2250</span>
<span class="t" style="left:1028.2659375px;top:767px;font-size:11px;color:#000;">2500</span>
<span class="t" style="left:1124.2659375px;top:767px;font-size:11px;color:#000;">2750</span>
<span class="t" style="left:615px;top:783px;font-size:11px;color:#000;letter-spacing:-0.055px;">Energy, keV</span>
<div class="a" style="left:1214px;top:171px;width:15px;height:626px;background:#f0f0f0"></div><div class="vl" style="left:1214px;top:171px;height:626px;background:#a6a6a6"></div><div class="vl" style="left:1215px;top:171px;height:626px;background:#fff"></div>
<div class="a" style="left:1215px;top:248px;width:13px;height:17px;background:#cdcdcd"></div>
<svg class="a" style="left:1217.5px;top:177px" width="8" height="6" viewBox="0 0 9 6"><path d="M0.7 5.2L4.5 1.4L8.3 5.2" stroke="#505050" stroke-width="2" fill="none"/></svg>
<svg class="a" style="left:1217.5px;top:786px" width="8" height="6" viewBox="0 0 9 6"><path d="M0.7 0.8L4.5 4.6L8.3 0.8" stroke="#505050" stroke-width="2" fill="none"/></svg>
<div class="hl" style="left:15px;top:101px;width:999px;background:#a0a0a0"></div><div class="hl" style="left:15px;top:102px;width:999px;background:#fff"></div>
<div class="hl" style="left:15px;top:135px;width:403px;background:#a0a0a0"></div><div class="hl" style="left:15px;top:136px;width:403px;background:#fff"></div>
<div class="hl" style="left:15px;top:169px;width:433px;background:#a0a0a0"></div>
<div class="hl" style="left:418px;top:136px;width:30px;background:#d4d4d4"></div>
<div class="vl" style="left:19px;top:71px;height:27px;background:#a0a0a0"></div><div class="vl" style="left:20px;top:71px;height:27px;background:#fff"></div><div class="a" style="left:18px;top:98px;width:2px;height:1px;background:#a0a0a0"></div>
<div class="vl" style="left:295px;top:71px;height:27px;background:#a0a0a0"></div><div class="vl" style="left:296px;top:71px;height:27px;background:#fff"></div><div class="a" style="left:294px;top:98px;width:2px;height:1px;background:#a0a0a0"></div>
<div class="vl" style="left:429px;top:71px;height:27px;background:#a0a0a0"></div><div class="vl" style="left:430px;top:71px;height:27px;background:#fff"></div><div class="a" style="left:428px;top:98px;width:2px;height:1px;background:#a0a0a0"></div>
<div class="vl" style="left:594px;top:71px;height:27px;background:#a0a0a0"></div><div class="vl" style="left:595px;top:71px;height:27px;background:#fff"></div><div class="a" style="left:593px;top:98px;width:2px;height:1px;background:#a0a0a0"></div>
<div class="vl" style="left:854px;top:71px;height:27px;background:#a0a0a0"></div><div class="vl" style="left:855px;top:71px;height:27px;background:#fff"></div><div class="a" style="left:853px;top:98px;width:2px;height:1px;background:#a0a0a0"></div>
<div class="vl" style="left:289px;top:69px;height:32px;background:#a0a0a0"></div><div class="vl" style="left:290px;top:69px;height:32px;background:#fff"></div>
<div class="vl" style="left:423px;top:69px;height:32px;background:#a0a0a0"></div><div class="vl" style="left:424px;top:69px;height:32px;background:#fff"></div>
<div class="vl" style="left:588px;top:69px;height:32px;background:#a0a0a0"></div><div class="vl" style="left:589px;top:69px;height:32px;background:#fff"></div>
<div class="vl" style="left:848px;top:69px;height:32px;background:#a0a0a0"></div><div class="vl" style="left:849px;top:69px;height:32px;background:#fff"></div>
<div class="vl" style="left:1013px;top:69px;height:32px;background:#a0a0a0"></div><div class="vl" style="left:1014px;top:69px;height:32px;background:#fff"></div>
<div class="vl" style="left:19px;top:105px;height:27px;background:#a0a0a0"></div><div class="vl" style="left:20px;top:105px;height:27px;background:#fff"></div><div class="a" style="left:18px;top:132px;width:2px;height:1px;background:#a0a0a0"></div>
<div class="vl" style="left:320px;top:105px;height:27px;background:#a0a0a0"></div><div class="vl" style="left:321px;top:105px;height:27px;background:#fff"></div><div class="a" style="left:319px;top:132px;width:2px;height:1px;background:#a0a0a0"></div>
<div class="vl" style="left:305px;top:103px;height:32px;background:#a0a0a0"></div><div class="vl" style="left:306px;top:103px;height:32px;background:#fff"></div>
<div class="vl" style="left:417px;top:103px;height:32px;background:#a0a0a0"></div><div class="vl" style="left:418px;top:103px;height:32px;background:#fff"></div>
<div class="vl" style="left:315px;top:103px;height:32px;background:#fff"></div>
<div class="vl" style="left:19px;top:139px;height:27px;background:#a0a0a0"></div><div class="vl" style="left:20px;top:139px;height:27px;background:#fff"></div><div class="a" style="left:18px;top:166px;width:2px;height:1px;background:#a0a0a0"></div>
<div class="vl" style="left:216px;top:139px;height:27px;background:#a0a0a0"></div><div class="vl" style="left:217px;top:139px;height:27px;background:#fff"></div><div class="a" style="left:215px;top:166px;width:2px;height:1px;background:#a0a0a0"></div>
<div class="vl" style="left:288px;top:139px;height:27px;background:#a0a0a0"></div><div class="vl" style="left:289px;top:139px;height:27px;background:#fff"></div><div class="a" style="left:287px;top:166px;width:2px;height:1px;background:#a0a0a0"></div>
<div class="vl" style="left:210px;top:137px;height:32px;background:#a0a0a0"></div><div class="vl" style="left:211px;top:137px;height:32px;background:#fff"></div>
<div class="vl" style="left:282px;top:137px;height:32px;background:#a0a0a0"></div><div class="vl" style="left:283px;top:137px;height:32px;background:#fff"></div>
<div class="vl" style="left:447px;top:137px;height:32px;background:#a0a0a0"></div><div class="vl" style="left:448px;top:137px;height:32px;background:#fff"></div>
<div class="cmb" style="left:54px;top:74px;width:203px;height:21px"></div><svg class="a" style="left:243px;top:82px" width="10" height="6" viewBox="0 0 10 6"><path d="M0.6 0.6L5 5L9.4 0.6" stroke="#444" stroke-width="1.1" fill="none"/></svg>
<div class="cmb" style="left:54px;top:108px;width:250px;height:21px"></div><svg class="a" style="left:290px;top:116px" width="10" height="6" viewBox="0 0 10 6"><path d="M0.6 0.6L5 5L9.4 0.6" stroke="#444" stroke-width="1.1" fill="none"/></svg>
<span class="t" style="left:58.7px;top:80px;font-size:11px;color:#000;letter-spacing:-0.499px;">HPGe(20%)</span>
<span class="t" style="left:58.7px;top:113px;font-size:11px;color:#000;letter-spacing:-0.115px;">Background control</span>
<svg class="a" style="left:26px;top:73px" width="25" height="24" viewBox="0 0 25 24"><defs><linearGradient id="lb" x1="0" y1="0" x2="1" y2="1"><stop offset="0" stop-color="#6fd0f8"/><stop offset=".5" stop-color="#b4ecff"/><stop offset="1" stop-color="#48bcf0"/></linearGradient></defs><rect x="0.7" y="8.7" width="14.6" height="14.6" rx="1.2" fill="#7ad0a4" stroke="#0a8a5a" stroke-width="1.2"/><rect x="3" y="11" width="4" height="4" fill="none" stroke="#0a7a50" stroke-width="1.1"/><circle cx="5" cy="19.5" r="1.9" fill="none" stroke="#0a7a50" stroke-width="1"/><path d="M8.5 18.5H13.5M8.5 21H13.5" stroke="#0a7a50" stroke-width="1"/><rect x="8.9" y="0.7" width="15" height="14.4" rx="1" fill="url(#lb)" stroke="#0a0acc" stroke-width="1.3"/><rect x="11.3" y="3.3" width="3.6" height="3.6" fill="none" stroke="#0a0acc" stroke-width="1.1"/><path d="M16.5 4H22M16.5 6.5H22M16.5 10.5H22M16.5 12.8H22" stroke="#0a0acc" stroke-width="1.1"/><circle cx="13" cy="11.5" r="1.8" fill="none" stroke="#0a0acc" stroke-width="1"/></svg>
<svg class="a" style="left:260px;top:73px" width="24" height="24" viewBox="0 0 24 24"><defs><linearGradient id="lb" x1="0" y1="0" x2="1" y2="1"><stop offset="0" stop-color="#6fd0f8"/><stop offset=".5" stop-color="#b4ecff"/><stop offset="1" stop-color="#48bcf0"/></linearGradient></defs><rect x="0.75" y="0.75" width="22.5" height="22.5" rx="2" fill="url(#lb)" stroke="#0a0acc" stroke-width="1.5"/><rect x="4" y="5" width="5" height="5" fill="none" stroke="#0a0acc" stroke-width="1.3"/><path d="M12 5.5H20M12 9.5H20M12 15H20M12 19H20" stroke="#0a0acc" stroke-width="1.3"/><circle cx="6.5" cy="17" r="2.6" fill="none" stroke="#0a0acc" stroke-width="1.2"/><circle cx="6.5" cy="17" r="0.9" fill="#0a0acc"/></svg>
<svg class="a" style="left:300px;top:73px" width="25" height="24" viewBox="0 0 25 24"><path d="M1 23 L1 15 C3 11 5 14 6 12 C7 6 7.5 1 8.5 1 C9.5 1 10 9 11 14 C13 20 18 22 24 23Z" fill="#fbb06a"/><path d="M1 15 C3 11 5 14 6 12 C7 6 7.5 1 8.5 1 C9.5 1 10 9 11 14 C13 20 18 22 24 23" fill="none" stroke="#ff1010" stroke-width="1.4"/><path d="M3 19.5 L23.5 5.5 L23.5 19.5Z" fill="#ffe9a8" stroke="#d9a21f" stroke-width="1.6" fill-opacity=".9"/><path d="M12 17 L20.5 11 L20.5 17Z" fill="#f0f0f0" stroke="#d9a21f" stroke-width="1.2"/></svg>
<svg class="a" style="left:333px;top:73px" width="23" height="24" viewBox="0 0 23 24"><rect width="23" height="24" fill="#0a9292"/><path d="M1 22.5 C8 22.5 9.5 14 11.5 1.5 C13.5 14 15 22.5 22 22.5" fill="none" stroke="#fff200" stroke-width="1.8"/><path d="M0 12.5H8M8 12.5L5 10M8 12.5L5 15M23 12.5H15M15 12.5L18 10M15 12.5L18 15" stroke="#8fe6ff" stroke-width="1.4" fill="none"/></svg>
<svg class="a" style="left:363px;top:73px" width="24" height="24" viewBox="0 0 24 24"><rect x="0.5" y="0.5" width="23" height="23" fill="#e6e6e6" stroke="#c9c9c9"/><path d="M3 21 C9 21 10 4 14 4 C18 4 18 21 22 21" fill="none" stroke="#d2d2d2" stroke-width="3"/><path d="M3.5 19V11H6V14H3.5M18.5 19V11H21V14H18.5" stroke="#b9b9b9" stroke-width="1" fill="#f2f2f2"/></svg>
<svg class="a" style="left:395px;top:74px" width="22" height="21" viewBox="0 0 22 21"><rect x="0.8" y="0.8" width="20" height="19.4" rx="3" fill="#d6d6d6" stroke="#5a5a5a" stroke-width="1.3"/><path d="M1 7 C5 2 9 3 13 8 C16 12 18 15 21 17" fill="none" stroke="#dd1111" stroke-width="1.7"/></svg>
<svg class="a" style="left:439px;top:75px" width="16" height="19" viewBox="0 0 16 19"><path d="M0 0.5 L16 9.5 L0 18.5Z" fill="#a6a6a6"/></svg>
<svg class="a" style="left:471px;top:77px" width="14" height="17" viewBox="0 0 14 17"><rect x="0" y="0" width="5.6" height="17" fill="#a6a6a6"/><rect x="8.4" y="0" width="5.6" height="17" fill="#a6a6a6"/></svg>
<svg class="a" style="left:499px;top:86px" width="20" height="7" viewBox="0 0 20 7"><rect x="0" y="0.5" width="20" height="2" fill="#a6a6a6"/><rect x="0" y="4" width="20" height="2.6" fill="#b9b9b9" stroke="#a6a6a6" stroke-width=".6"/></svg>
<svg class="a" style="left:529px;top:78px" width="22" height="15" viewBox="0 0 22 15"><rect x="2.5" y="3" width="19.5" height="12" fill="#b4b4b4"/><rect x="0" y="0" width="19" height="11.5" fill="#cfcfcf" stroke="#bdbdbd" stroke-width=".8"/></svg>
<svg class="a" style="left:561px;top:75px" width="20" height="20" viewBox="0 0 20 20"><rect x="0.6" y="0.6" width="18.8" height="18.8" rx="2" fill="#ececec" stroke="#a9a9a9" stroke-width="1.2"/><rect x="3.2" y="3.6" width="4.6" height="4.6" fill="#fafafa" stroke="#b0b0b0"/><circle cx="5.6" cy="14.2" r="2.5" fill="none" stroke="#b0b0b0"/><path d="M10.5 4H17M10.5 7.5H17M10.5 12.5H17M10.5 16H17" stroke="#b0b0b0" stroke-width="1.1"/></svg>
<svg class="a" style="left:600px;top:73px" width="24" height="24" viewBox="0 0 24 24"><path d="M1 23 V15 C4 12 5 8 7 2 C9 8 10 15 13 18 C16 21 20 22 23 23Z" fill="#fbb06a"/><path d="M14 13 L22.5 21.5" stroke="#7a3a10" stroke-width="2.6" stroke-linecap="round"/><circle cx="9.2" cy="9" r="6.6" fill="rgba(235,240,245,.75)" stroke="#0b6e86" stroke-width="2"/><path d="M7 3.5V14" stroke="#fbb06a" stroke-width="2"/></svg>
<svg class="a" style="left:630px;top:84px" width="5.4" height="3" viewBox="0 0 5.4 3"><path d="M0 0H5.4L2.7 3Z" fill="#000"/></svg>
<svg class="a" style="left:703px;top:84px" width="5.4" height="3" viewBox="0 0 5.4 3"><path d="M0 0H5.4L2.7 3Z" fill="#000"/></svg>
<svg class="a" style="left:837.6px;top:84px" width="5.4" height="3" viewBox="0 0 5.4 3"><path d="M0 0H5.4L2.7 3Z" fill="#000"/></svg>
<svg class="a" style="left:642px;top:73px" width="25" height="24" viewBox="0 0 25 24"><path d="M1 23 L2.4 21 L3.6 11 L4.8 21 L5.8 19 L7.2 0.8 L8.8 20 L10.4 21 L11.4 19 L13 14.5 L14.4 21 L16 22.4 L23 23Z" fill="#fbc07a" stroke="#ff1010" stroke-width="1.1"/><path d="M0 23.2H24" stroke="#2222ee" stroke-width="1.4"/><rect x="11.9" y="1.7" width="11.6" height="11.6" fill="#fff" stroke="#6a1010" stroke-width="1.4"/><path d="M14.3 4.1L21.1 10.9M21.1 4.1L14.3 10.9" stroke="#e01010" stroke-width="2.7"/></svg>
<svg class="a" style="left:673px;top:73px" width="25" height="24" viewBox="0 0 25 24"><path d="M1 23 V15 C6 15 9 15 11 17 C14 20 19 21 24 22 V23Z" fill="#fbb06a"/><path d="M1 15 C6 15 9 15 11 17 C14 20 19 21 24 22" fill="none" stroke="#0b7e8e" stroke-width="1.4"/><path d="M1 14 C7 14 9 10 10 1.5 C11 10 12 16 16 19 C19 21 22 21.5 24 21.5" fill="none" stroke="#ee1010" stroke-width="1.5"/></svg>
<svg class="a" style="left:715px;top:73px" width="25" height="24" viewBox="0 0 25 24"><path d="M0.5 23 C4 18 5 4 7 4 C9 4 10 15 13 16 C15 16 16 11 18 11 C20 11 21 20 24 23Z" fill="#dcdcdc" stroke="#bdbdbd" stroke-width="1"/></svg>
<svg class="a" style="left:746px;top:73px" width="23" height="24" viewBox="0 0 23 24"><path d="M2 6.5 C2 2 4 0.8 6.5 0.8 C9.5 0.8 11.5 2.5 11.5 5.5 C11.5 9 6.5 9.5 6.5 13" fill="none" stroke="#b4000f" stroke-width="3"/><circle cx="6.5" cy="16.8" r="1.8" fill="#b4000f"/><circle cx="11.6" cy="15.6" r="2.7" fill="#3a9a3a"/><circle cx="17.4" cy="16.6" r="2.9" fill="#1c6cd8"/><circle cx="14.2" cy="18.8" r="3.2" fill="#ee4a1a"/></svg>
<svg class="a" style="left:777px;top:73px" width="24" height="24" viewBox="0 0 24 24"><path d="M2 6.5 C2 2 4 0.8 6.5 0.8 C9.5 0.8 11.5 2.5 11.5 5.5 C11.5 9 6.5 9.5 6.5 13" fill="none" stroke="#b4000f" stroke-width="3"/><circle cx="6.5" cy="16.8" r="1.8" fill="#b4000f"/><text x="8.8" y="20.8" font-family="Liberation Sans" font-weight="bold" font-size="12.5" fill="#0b5568" stroke="#0b5568" stroke-width=".4" textLength="14.6">Bq</text></svg>
<svg class="a" style="left:807px;top:73px" width="25" height="24" viewBox="0 0 25 24"><path d="M1 23 V12 C4 11 6 16 9 19 C10 14 11 9 12.5 9 C13.5 9 13.5 14 14.5 15 C15.5 10 15.5 2 17 2 C18.5 2 19 15 20.5 18 C22 20 23 20 24 20 V23Z" fill="#fbb06a" stroke="#c46a1a" stroke-width=".6"/><path d="M1.5 2 C4 1.5 6 6 8.5 12 C9.5 16 9.5 21 8 21.5 C6.5 21 7 16 9 11 C10.5 7 12.5 3 14 1.5" fill="none" stroke="#b01010" stroke-width="2.6"/></svg>
<svg class="a" style="left:860px;top:73px" width="24" height="24" viewBox="0 0 24 24"><defs><radialGradient id="eg" cx=".5" cy=".5" r=".55"><stop offset="0" stop-color="#e8f3fc"/><stop offset="1" stop-color="#bcdcf4"/></radialGradient></defs><circle cx="12.4" cy="12" r="10.9" fill="url(#eg)" stroke="#3cb4f0" stroke-width="1.2"/><text x="9" y="20.2" font-family="Liberation Serif" font-size="22" fill="#a8ccf0" stroke="#2c62b4" stroke-width=".9" textLength="12.5" lengthAdjust="spacingAndGlyphs">E</text><path d="M7.2 4.6V19.6M5.6 4.6H8.8M5.6 19.6H8.8" stroke="#2c62b4" stroke-width="1.5"/><circle cx="3.4" cy="6.2" r="2.5" fill="#f04444"/></svg>
<svg class="a" style="left:891px;top:73px" width="24" height="24" viewBox="0 0 24 24"><rect x="0" y="0" width="24" height="24" fill="#c4c4c4"/><rect x="2.8" y="3" width="21.2" height="14.6" fill="#fbb040" stroke="#1a1a1a" stroke-width="2"/><path d="M6.6 6H11.4L10.6 10.2H6L5.2 14.6H10.4M14.6 6H19.4L18.8 10.2H15.4M18.8 10.2L18 14.6H13.2" fill="none" stroke="#111" stroke-width="1.5"/><path d="M2.8 24V20.4H11.6V24M15.2 24V20.4H24" fill="none" stroke="#1a1a1a" stroke-width="1.9"/></svg>
<svg class="a" style="left:922px;top:73px" width="24" height="24" viewBox="0 0 24 24"><rect x="0.75" y="0.75" width="22.5" height="22.5" fill="#e4e4e4" stroke="#8a8a8a" stroke-width="1.5"/><rect x="2.5" y="2.5" width="19" height="19" fill="none" stroke="#c6c6c6"/><path d="M7.5 3.5L11 10H9V20.5H6V10H4Z" fill="#12c012"/><path d="M16.5 20.5L20 14H18V3.5H15V14H13Z" fill="#1030e0"/></svg>
<svg class="a" style="left:952.5px;top:73px" width="24.5" height="24" viewBox="0 0 24.5 24"><rect width="24.5" height="24" fill="#fff"/><path d="M2 12 L12 4 L23 11 L13 20Z" fill="#f7a21c" stroke="#c97a10" stroke-width=".8"/><path d="M2 12 L12 4" stroke="#222" stroke-width="3" stroke-dasharray="2 1.6"/><path d="M2 12 L12 4" stroke="#ffe600" stroke-width="2.4" stroke-dasharray="1.6 2" /><path d="M13 20 L23 11 L23 13 L13 22Z" fill="#6a6a6a"/></svg>
<svg class="a" style="left:984px;top:73px" width="24" height="24" viewBox="0 0 24 24"><path d="M4.5 5.2H19.5" stroke="#c46a1a" stroke-width="1.4"/><path d="M12 4V20" stroke="#c46a1a" stroke-width="2"/><path d="M7 21.5 C9 19 15 19 17 21.5Z" fill="#c46a1a"/><path d="M0.5 11 H11 C10 15.5 2 15.5 0.5 11Z" fill="#c9662a"/><path d="M13 11 H23.5 C22.5 15.5 14.5 15.5 13 11Z" fill="#c9662a"/><circle cx="3.6" cy="9.6" r="2" fill="#1c74c4"/><circle cx="7.6" cy="9.4" r="2" fill="#d42a2a"/><circle cx="5.6" cy="8.6" r="1.7" fill="#1f9a3a"/><circle cx="16.4" cy="9.6" r="2" fill="#d42a2a"/><circle cx="20.2" cy="9.4" r="2" fill="#1c74c4"/><circle cx="18.4" cy="8.6" r="1.7" fill="#1f9a3a"/></svg>
<svg class="a" style="left:26.5px;top:107px" width="23" height="24" viewBox="0 0 23 24"><defs><linearGradient id="og" x1="0" y1="0" x2="1" y2="1"><stop offset="0" stop-color="#f9c9a0"/><stop offset="1" stop-color="#e0873e"/></linearGradient></defs><rect x="5.8" y="0.7" width="15.6" height="22.8" fill="url(#og)" stroke="#ad5208" stroke-width="1.2"/><path d="M9 4.2H19M10.6 8H19M11.6 11.8H19M11.6 15.6H19M9 19.4H19" stroke="#ad5208" stroke-width="1"/><path d="M0.3 2.2 L10.2 7.5 L0.3 12.8Z" fill="#10b010"/></svg>
<svg class="a" style="left:325.5px;top:107px" width="25" height="24" viewBox="0 0 25 24"><defs><linearGradient id="pg" x1="0" y1="0" x2="0" y2="1"><stop offset="0" stop-color="#f08a3a"/><stop offset="1" stop-color="#ffe27a"/></linearGradient></defs><path d="M0.29999999999999993 22 C1.5 22 1.7999999999999998 10.2 2.9 10.2 C4.0 10.2 4.300000000000001 22 5.5 22ZM4.7 22 C5.8999999999999995 22 6.199999999999999 6 7.3 6 C8.4 6 8.700000000000001 22 9.9 22ZM10.4 22 C11.6 22 11.9 0.6 13 0.6 C14.1 0.6 14.4 22 15.6 22Z" fill="url(#pg)" stroke="#ee1010" stroke-width="1.2"/><path d="M0.3 22.6H23.4" stroke="#2222ee" stroke-width="1.6"/><text x="16.6" y="14.2" font-family="Liberation Serif" font-style="italic" font-weight="bold" font-size="19.5" fill="#0b5568">i</text></svg>
<svg class="a" style="left:356px;top:107px" width="26" height="24" viewBox="0 0 26 24"><path d="M1.2 16 V23.6 H4 V17.5Z" fill="#fff27a"/><path d="M17 23.6 H24.6 V22 H17Z" fill="#fff27a"/><path d="M3.4 17.2 C6 17 7.4 3 9.6 3 C11.8 3 12.6 19 16.5 21.4 L17.6 23.6 H3.4Z" fill="#37b4ae"/><path d="M4.4 17.6 C6.6 16 7.4 2 9.6 2 C11.8 2 12.6 18 16 21.2 C17.5 22 19 22 20 22" fill="none" stroke="#ee1010" stroke-width="1.4"/><path d="M1.2 15.6 C2.6 18 4.5 18 6.5 18.2 C9.5 18.6 10 22 13.5 22.2 C17 22.4 21 22 24.6 22" fill="none" stroke="#1a1aee" stroke-width="1.7"/><path d="M2.6 15V5.6H6.2V9.6H2.6" fill="none" stroke="#ad5208" stroke-width="1.2"/><text x="17.4" y="14.2" font-family="Liberation Serif" font-style="italic" font-weight="bold" font-size="19.5" fill="#0b5568">i</text></svg>
<svg class="a" style="left:388px;top:107px" width="25" height="24" viewBox="0 0 25 24"><defs><linearGradient id="bqg" x1="0" y1="0" x2="1" y2="0"><stop offset="0" stop-color="#e8925a"/><stop offset=".2" stop-color="#f9b98a"/><stop offset=".8" stop-color="#f9b98a"/><stop offset="1" stop-color="#e8925a"/></linearGradient></defs><rect x="0" y="4.3" width="15" height="18.7" fill="url(#bqg)"/><path d="M2.5 8.5H12.5M2.5 11H12.5" stroke="#d9783a" stroke-width="1"/><text x="0.8" y="20.6" font-family="Liberation Sans" font-weight="bold" font-size="11.5" fill="#0b5568" stroke="#0b5568" stroke-width=".5" textLength="13.4">Bq</text><text x="17.2" y="14.2" font-family="Liberation Serif" font-style="italic" font-weight="bold" font-size="19.5" fill="#0b5568">i</text></svg>
<svg class="a" style="left:30px;top:144px" width="21" height="22" viewBox="0 0 21 22"><rect x="0.7" y="1.7" width="14.6" height="14.6" fill="#fdb873" stroke="#ad5208" stroke-width="1.4"/><path d="M8.0 2V16M1 9.0H15" stroke="#ad5208" stroke-width="1.3"/><path d="M14.2 8 L15.8 8 L16.2 9.6 L17.6 10.2 L19 9.2 L20.2 10.4 L20.2 21.6 L11 21.6 L9.8 20.6 L10.6 19 L9.8 17.6 L8.2 17.2 L8.2 15.4 L9.8 15 L10.4 13.6 L9.4 12.2 L10.6 11 L12.2 11.8 L13.6 11.2Z" fill="#0b5568"/><circle cx="14.6" cy="16.6" r="3.4" fill="#f4f4f4"/></svg>
<svg class="a" style="left:61px;top:143px" width="21" height="23" viewBox="0 0 21 23"><rect x="0.7" y="2.7" width="14.6" height="14.6" fill="#fdb873" stroke="#ad5208" stroke-width="1.4"/><path d="M8.0 3V17M1 10.0H15" stroke="#ad5208" stroke-width="1.3"/><rect x="10.5" y="13.0" width="10.4" height="7.6" fill="#0b7e96"/><ellipse cx="15.7" cy="13.2" rx="5.2" ry="1.8" fill="#0b7e96"/><ellipse cx="15.7" cy="20.5" rx="5.2" ry="1.8" fill="#0b7e96"/><path d="M10.5 15.4 C12.5 17.4 18.9 17.4 20.9 15.4M10.5 18.2 C12.5 20.2 18.9 20.2 20.9 18.2" fill="none" stroke="#e6f6fa" stroke-width="1.1"/><path d="M14 10.5 C15 8 15 6 13.5 4.5 L11.5 6 L11 0.8 L16.6 1 L15 2.8 C17.5 5 17.5 8 16.5 10.5Z" fill="#c01010"/></svg>
<svg class="a" style="left:92px;top:143px" width="21" height="23" viewBox="0 0 21 23"><rect x="0.7" y="2.7" width="14.6" height="14.6" fill="#e2e2e2" stroke="#c4c4c4" stroke-width="1.4"/><path d="M8.0 3V17M1 10.0H15" stroke="#c4c4c4" stroke-width="1.3"/><rect x="10.5" y="13.0" width="10.4" height="7.6" fill="#b4b4b4"/><ellipse cx="15.7" cy="13.2" rx="5.2" ry="1.8" fill="#b4b4b4"/><ellipse cx="15.7" cy="20.5" rx="5.2" ry="1.8" fill="#b4b4b4"/><path d="M10.5 15.4 C12.5 17.4 18.9 17.4 20.9 15.4M10.5 18.2 C12.5 20.2 18.9 20.2 20.9 18.2" fill="none" stroke="#e8e8e8" stroke-width="1.1"/><path d="M13 2 C16 2 17.5 4 17.5 7 L19.8 7 L16.5 11 L13.2 7 L15.3 7 C15.3 5 14.5 4 13 4Z" fill="#b4b4b4"/></svg>
<svg class="a" style="left:119px;top:141px" width="25" height="25" viewBox="0 0 25 25"><rect x="4.7" y="4.7" width="14.6" height="14.6" fill="#fdb873" stroke="#ad5208" stroke-width="1.4"/><path d="M12.0 5V19M5 12.0H19" stroke="#ad5208" stroke-width="1.3"/><path d="M12 0.6V4.6M10.2 2.8H13.8M12 23.4V19.4M10.2 21.2H13.8M0.6 12H4.6M2.8 10.2V13.8M23.4 12H19.4M21.2 10.2V13.8" stroke="#0b5568" stroke-width="1.5" fill="none"/></svg>
<svg class="a" style="left:153.5px;top:144px" width="21" height="22" viewBox="0 0 21 22"><rect x="0.7" y="1.7" width="14.6" height="14.6" fill="#fdb873" stroke="#ad5208" stroke-width="1.4"/><path d="M8.0 2V16M1 9.0H15" stroke="#ad5208" stroke-width="1.3"/><rect x="8.6" y="9.6" width="11.2" height="11.2" fill="#fff" stroke="#5a1010" stroke-width="1.2"/><path d="M10.8 11.8L17.6 18.6M17.6 11.8L10.8 18.6" stroke="#e01010" stroke-width="2.4"/></svg>
<svg class="a" style="left:185px;top:140px" width="21" height="22" viewBox="0 0 21 22"><rect x="0.7" y="5.7" width="14.6" height="14.6" fill="#fdb873" stroke="#ad5208" stroke-width="1.4"/><path d="M8.0 6V20M1 13.0H15" stroke="#ad5208" stroke-width="1.3"/><circle cx="15.8" cy="5" r="4.8" fill="#f01818"/><rect x="12.6" y="4" width="6.4" height="2" fill="#fff"/></svg>
<svg class="a" style="left:223px;top:144px" width="24" height="22" viewBox="0 0 24 22"><path d="M0.5 17 V1.5 H7 L9 4 H16 V7" fill="#ad5208" stroke="#ad5208" stroke-width="1" stroke-linejoin="round"/><path d="M0.8 17.5 L5 7 H22.5 L18 17.5Z" fill="#fbb06a" stroke="#fbb06a" stroke-width=".8"/><rect x="12.5" y="11.0" width="10.4" height="7.6" fill="#0b7e96"/><ellipse cx="17.7" cy="11.2" rx="5.2" ry="1.8" fill="#0b7e96"/><ellipse cx="17.7" cy="18.5" rx="5.2" ry="1.8" fill="#0b7e96"/><path d="M12.5 13.4 C14.5 15.4 20.9 15.4 22.9 13.4M12.5 16.2 C14.5 18.2 20.9 18.2 22.9 16.2" fill="none" stroke="#e6f6fa" stroke-width="1.1"/></svg>
<svg class="a" style="left:256px;top:144px" width="22" height="22" viewBox="0 0 22 22"><path d="M0.5 0.5 H15 L18.5 4 V17.5 H0.5Z" fill="#ad5208"/><rect x="4" y="0.5" width="10.5" height="6.6" fill="#fbb06a"/><rect x="9.6" y="1.4" width="2.6" height="4.6" fill="#ad5208"/><rect x="3" y="10" width="13" height="7.5" fill="#fbb06a"/><rect x="10.5" y="11.0" width="10.4" height="7.6" fill="#0b7e96"/><ellipse cx="15.7" cy="11.2" rx="5.2" ry="1.8" fill="#0b7e96"/><ellipse cx="15.7" cy="18.5" rx="5.2" ry="1.8" fill="#0b7e96"/><path d="M10.5 13.4 C12.5 15.4 18.9 15.4 20.9 13.4M10.5 16.2 C12.5 18.2 18.9 18.2 20.9 16.2" fill="none" stroke="#e6f6fa" stroke-width="1.1"/></svg>
<svg class="a" style="left:294px;top:144px" width="24" height="19" viewBox="0 0 24 19"><path d="M0.5 17 V1.5 H7 L9 4 H16 V7" fill="#ad5208" stroke="#ad5208" stroke-width="1" stroke-linejoin="round"/><path d="M0.8 17.5 L5 7 H22.5 L18 17.5Z" fill="#fbb06a" stroke="#fbb06a" stroke-width=".8"/></svg>
<svg class="a" style="left:327.5px;top:144px" width="19" height="18" viewBox="0 0 19 18"><path d="M0.5 0.5 H15 L18.5 4 V17.5 H0.5Z" fill="#ad5208"/><rect x="4" y="0.5" width="10.5" height="6.6" fill="#fbb06a"/><rect x="9.6" y="1.4" width="2.6" height="4.6" fill="#ad5208"/><rect x="3" y="10" width="13" height="7.5" fill="#fbb06a"/></svg>
<svg class="a" style="left:356.5px;top:142.5px" width="23" height="21" viewBox="0 0 23 21"><rect x="5.5" y="0.7" width="11.5" height="13" fill="#fbb06a" stroke="#ad5208" stroke-width="1.2"/><path d="M0.5 20 V12.5 H22.5 V20Z" fill="#ad5208"/><rect x="19" y="14" width="2" height="1.4" fill="#b6e61a"/></svg>
<svg class="a" style="left:387px;top:141px" width="24" height="23" viewBox="0 0 24 23"><path d="M1 15 L15.5 8 L23.5 11.5 L9.5 19.5Z" fill="#fbb06a" stroke="#c46a1a" stroke-width=".8"/><path d="M1 15 V17.5 L9.5 22.5 V19.5Z" fill="#c46a1a"/><path d="M9.5 19.5 L23.5 11.5 V14 L9.5 22.5Z" fill="#e8e0d0" stroke="#c46a1a" stroke-width=".6"/><circle cx="5.6" cy="6" r="4.8" fill="#1f9a3a"/><circle cx="14.6" cy="6" r="5" fill="#1c60d4"/><circle cx="9.6" cy="10.6" r="5.4" fill="#f01a10"/><circle cx="8.4" cy="9" r="1.8" fill="#ff8a3a" opacity=".7"/></svg>
<svg class="a" style="left:417.5px;top:140px" width="25" height="25" viewBox="0 0 25 25"><path d="M1 24.5 V13 L12 13 L13 19 L14.5 17 L15.5 20 L16.6 13 L17.6 4.5 L18.6 14 L19.5 19 L21 17.5 L22 21.5 L24.5 22 V24.5Z" fill="#fbb070"/><rect x="1" y="0.8" width="13.5" height="13.5" fill="#37b4c4" stroke="#0b5568" stroke-width="1.3"/><rect x="3.2" y="3" width="3" height="3" fill="none" stroke="#0b5568" stroke-width="1"/><path d="M8 3.8H12.5M8 6H12.5M8 9.8H12.5M8 12H12.5" stroke="#0b5568" stroke-width="1"/><circle cx="4.7" cy="10.6" r="1.5" fill="none" stroke="#0b5568" stroke-width="1"/></svg>
<div class="a" style="left:371px;top:176px;width:723px;height:501px;background:#f0f0f0;box-shadow:0 0 0 1px rgba(60,60,90,.55),0 2px 10px 1px rgba(0,0,0,.45)"></div>
<div class="a" style="left:371px;top:176px;width:723px;height:30px;background:#fff"></div>
<div class="hl" style="left:371px;top:206px;width:723px;background:#a9a9b5"></div>
<svg class="a" style="left:378.5px;top:182px" width="16" height="16" viewBox="0 0 16 16"><path d="M0 9.9 L2.8 9.9 L9.3 0.2 L10 0.2 L9.8 3.2 L4.4 10.9 L0 10.9Z" fill="#ffd400"/><path d="M10 0.2 L10.4 8.2 L6.7 15.8 L6.2 15.6 L7.4 5.8Z" fill="#ffdf55"/><path d="M6.7 15.8 L13.4 4.3 L14 4.3 L14.6 9.7 L16 9.9 L16 10.8 L13.4 10.6 L12.9 7.6 L7.6 15Z" fill="#ffe37a"/></svg>
<span class="t" style="left:400.7px;top:185px;font-size:12.2px;color:#000;letter-spacing:0.086px;">Activity information</span>
<span class="t" style="left:510px;top:185px;font-size:12.2px;color:#000;letter-spacing:-0.362px;">-</span>
<span class="t" style="left:517.5px;top:185px;font-size:12.2px;color:#000;letter-spacing:-0.518px;">AllZonesSew</span>
<span class="t" style="left:590.8px;top:185px;font-size:12.2px;color:#000;letter-spacing:-0.250px;">[C:\LSRM\Work\GP\HPGe(20%)\Spe\Point25\Eu152-6649-25cm.spe]</span>
<div class="a" style="left:975px;top:190px;width:10px;height:1px;background:#000"></div>
<div class="a" style="left:1020px;top:185px;width:10px;height:10px;border:1px solid #000"></div>
<svg class="a" style="left:1065px;top:184px" width="12" height="12" viewBox="0 0 12 12"><path d="M1 1 L11 11 M11 1 L1 11" stroke="#000" stroke-width="1" fill="none"/></svg>
<div class="a" style="left:372px;top:207px;width:721px;height:149px;background:#fff"></div>
<div class="hl" style="left:372px;top:356px;width:721px;background:#a0a0a0"></div>
<div class="vl" style="left:515px;top:208px;height:19px;background:#e5e5e5"></div>
<div class="vl" style="left:515px;top:227px;height:111px;background:repeating-linear-gradient(180deg,#e4e4e4 0 1px,#fff 1px 2px)"></div>
<div class="vl" style="left:601px;top:208px;height:19px;background:#e5e5e5"></div>
<div class="vl" style="left:601px;top:227px;height:111px;background:repeating-linear-gradient(180deg,#e4e4e4 0 1px,#fff 1px 2px)"></div>
<div class="vl" style="left:725px;top:208px;height:19px;background:#e5e5e5"></div>
<div class="vl" style="left:725px;top:227px;height:111px;background:repeating-linear-gradient(180deg,#e4e4e4 0 1px,#fff 1px 2px)"></div>
<div class="vl" style="left:841px;top:208px;height:19px;background:#e5e5e5"></div>
<div class="vl" style="left:841px;top:227px;height:111px;background:repeating-linear-gradient(180deg,#e4e4e4 0 1px,#fff 1px 2px)"></div>
<div class="vl" style="left:964px;top:208px;height:19px;background:#e5e5e5"></div>
<div class="vl" style="left:964px;top:227px;height:111px;background:repeating-linear-gradient(180deg,#e4e4e4 0 1px,#fff 1px 2px)"></div>
<div class="vl" style="left:1090px;top:208px;height:19px;background:#e5e5e5"></div>
<div class="hl" style="left:374px;top:244px;width:716px;background:repeating-linear-gradient(90deg,#e0e0e0 0 1px,#fff 1px 2px)"></div>
<div class="hl" style="left:374px;top:262px;width:716px;background:repeating-linear-gradient(90deg,#e0e0e0 0 1px,#fff 1px 2px)"></div>
<div class="hl" style="left:374px;top:280px;width:716px;background:repeating-linear-gradient(90deg,#e0e0e0 0 1px,#fff 1px 2px)"></div>
<div class="hl" style="left:374px;top:298px;width:716px;background:repeating-linear-gradient(90deg,#e0e0e0 0 1px,#fff 1px 2px)"></div>
<div class="hl" style="left:374px;top:316px;width:716px;background:repeating-linear-gradient(90deg,#e0e0e0 0 1px,#fff 1px 2px)"></div>
<span class="t" style="left:379.4px;top:212px;font-size:12px;color:#000;letter-spacing:-0.548px;">Nuclide/Energy</span>
<span class="t" style="left:574px;top:212px;font-size:12px;color:#000;letter-spacing:-0.737px;">Area</span>
<span class="t" style="left:661.6px;top:212px;font-size:12px;color:#000;letter-spacing:-0.614px;">Area uncert.</span>
<span class="t" style="left:766.7px;top:212px;font-size:12px;color:#000;letter-spacing:-0.411px;">Activity,Bq</span>
<span class="t" style="left:878.1px;top:212px;font-size:12px;color:#000;letter-spacing:-0.585px;">Activity uncert.,%</span>
<span class="t" style="left:971.5px;top:212px;font-size:12px;color:#000;letter-spacing:-0.846px;">MDA,Bq</span>
<svg class="a" style="left:824px;top:216px" width="10" height="5" viewBox="0 0 10 5"><path d="M0.3 0 L9.7 0 L5 5Z" fill="#9a9a9a"/></svg>
<div class="a" style="left:378px;top:231px;width:9px;height:9px;border:1px solid #919191;border-radius:1px;background:linear-gradient(135deg,#fff,#dcdcdc)"></div><div class="a" style="left:380px;top:235px;width:5px;height:1px;background:#1e2f8c"></div><div class="a" style="left:382px;top:233px;width:1px;height:5px;background:#1e2f8c"></div>
<div class="a" style="left:396px;top:229px;width:13px;height:13px;border:1px solid #333;background:#fff"></div><svg class="a" style="left:396px;top:229px" width="13" height="13" viewBox="0 0 13 13"><path d="M2.6 6.4 L5.3 9.2 L10.4 3.4" stroke="#333" stroke-width="1.25" fill="none"/></svg>
<svg class="a" style="left:415.5px;top:229.5px" width="16" height="13" viewBox="0 0 16 13"><defs><radialGradient id="rb" cx=".45" cy=".4" r=".6"><stop offset="0" stop-color="#ff8a1e"/><stop offset="1" stop-color="#e0201a"/></radialGradient></defs><circle cx="4.6" cy="4.6" r="4.3" fill="#1f9a3a"/><circle cx="11" cy="4.8" r="4.4" fill="#1c74c4"/><circle cx="7.2" cy="7.9" r="4.6" fill="url(#rb)"/></svg>
<span class="t" style="left:437.2px;top:231px;font-size:11px;color:#000;font-weight:bold;letter-spacing:0.405px;">Eu-152</span>
<span class="t" style="left:561.7px;top:231px;font-size:11px;color:#000;letter-spacing:-0.198px;">116500</span>
<span class="t" style="left:697px;top:231px;font-size:11px;color:#000;letter-spacing:-0.292px;">2400</span>
<span class="t" style="left:802px;top:231px;font-size:11px;color:#000;font-weight:bold;letter-spacing:0.783px;">47000</span>
<span class="t" style="left:943.1px;top:231px;font-size:11px;color:#000;letter-spacing:0.270px;">0,6</span>
<span class="t" style="left:974px;top:231px;font-size:11px;color:#000;letter-spacing:-0.617px;">150</span>
<div class="a" style="left:378px;top:249px;width:9px;height:9px;border:1px solid #919191;border-radius:1px;background:linear-gradient(135deg,#fff,#dcdcdc)"></div><div class="a" style="left:380px;top:253px;width:5px;height:1px;background:#1e2f8c"></div><div class="a" style="left:382px;top:251px;width:1px;height:5px;background:#1e2f8c"></div>
<div class="a" style="left:396px;top:247px;width:13px;height:13px;border:1px solid #0078d7;background:#fff"></div><svg class="a" style="left:396px;top:247px" width="13" height="13" viewBox="0 0 13 13"><path d="M2.6 6.4 L5.3 9.2 L10.4 3.4" stroke="#0078d7" stroke-width="1.25" fill="none"/></svg>
<svg class="a" style="left:415.5px;top:247.5px" width="16" height="13" viewBox="0 0 16 13"><defs><radialGradient id="rb" cx=".45" cy=".4" r=".6"><stop offset="0" stop-color="#ff8a1e"/><stop offset="1" stop-color="#e0201a"/></radialGradient></defs><circle cx="4.6" cy="4.6" r="4.3" fill="#1f9a3a"/><circle cx="11" cy="4.8" r="4.4" fill="#1c74c4"/><circle cx="7.2" cy="7.9" r="4.6" fill="url(#rb)"/></svg>
<span class="t" style="left:437.2px;top:249px;font-size:11px;color:#000;font-weight:bold;letter-spacing:0.365px;">K-40</span>
<span class="t" style="left:580px;top:249px;font-size:11px;color:#000;letter-spacing:-0.650px;">134</span>
<span class="t" style="left:709px;top:249px;font-size:11px;color:#000;letter-spacing:-0.467px;">25</span>
<span class="t" style="left:809.2px;top:249px;font-size:11px;color:#000;font-weight:bold;letter-spacing:0.708px;">2500</span>
<span class="t" style="left:948.6px;top:249px;font-size:11px;color:#000;letter-spacing:-0.817px;">19</span>
<span class="t" style="left:973px;top:249px;font-size:11px;color:#000;letter-spacing:-0.284px;">600</span>
<div class="a" style="left:378px;top:267px;width:9px;height:9px;border:1px solid #919191;border-radius:1px;background:linear-gradient(135deg,#fff,#dcdcdc)"></div><div class="a" style="left:380px;top:271px;width:5px;height:1px;background:#1e2f8c"></div><div class="a" style="left:382px;top:269px;width:1px;height:5px;background:#1e2f8c"></div>
<div class="a" style="left:396px;top:265px;width:13px;height:13px;border:1px solid #333;background:#fff"></div><svg class="a" style="left:396px;top:265px" width="13" height="13" viewBox="0 0 13 13"><path d="M2.6 6.4 L5.3 9.2 L10.4 3.4" stroke="#333" stroke-width="1.25" fill="none"/></svg>
<svg class="a" style="left:415.5px;top:265.5px" width="16" height="13" viewBox="0 0 16 13"><defs><radialGradient id="rb" cx=".45" cy=".4" r=".6"><stop offset="0" stop-color="#ff8a1e"/><stop offset="1" stop-color="#e0201a"/></radialGradient></defs><circle cx="4.6" cy="4.6" r="4.3" fill="#1f9a3a"/><circle cx="11" cy="4.8" r="4.4" fill="#1c74c4"/><circle cx="7.2" cy="7.9" r="4.6" fill="url(#rb)"/></svg>
<span class="t" style="left:437.2px;top:267px;font-size:11px;color:#000;font-weight:bold;letter-spacing:0.671px;">Ra-226</span>
<span class="t" style="left:568.9px;top:267px;font-size:11px;color:#000;letter-spacing:-0.066px;">&lt; 840</span>
<span class="t" style="left:816px;top:267px;font-size:11px;color:#000;font-weight:bold;letter-spacing:0.716px;">290</span>
<span class="t" style="left:948.6px;top:267px;font-size:11px;color:#000;letter-spacing:-0.817px;">13</span>
<span class="t" style="left:974px;top:267px;font-size:11px;color:#000;letter-spacing:-0.617px;">120</span>
<div class="a" style="left:378px;top:285px;width:9px;height:9px;border:1px solid #919191;border-radius:1px;background:linear-gradient(135deg,#fff,#dcdcdc)"></div><div class="a" style="left:380px;top:289px;width:5px;height:1px;background:#1e2f8c"></div><div class="a" style="left:382px;top:287px;width:1px;height:5px;background:#1e2f8c"></div>
<div class="a" style="left:396px;top:283px;width:13px;height:13px;border:1px solid #333;background:#fff"></div><svg class="a" style="left:396px;top:283px" width="13" height="13" viewBox="0 0 13 13"><path d="M2.6 6.4 L5.3 9.2 L10.4 3.4" stroke="#333" stroke-width="1.25" fill="none"/></svg>
<svg class="a" style="left:415.5px;top:283.5px" width="16" height="13" viewBox="0 0 16 13"><defs><radialGradient id="rb" cx=".45" cy=".4" r=".6"><stop offset="0" stop-color="#ff8a1e"/><stop offset="1" stop-color="#e0201a"/></radialGradient></defs><circle cx="4.6" cy="4.6" r="4.3" fill="#1f9a3a"/><circle cx="11" cy="4.8" r="4.4" fill="#1c74c4"/><circle cx="7.2" cy="7.9" r="4.6" fill="url(#rb)"/></svg>
<span class="t" style="left:437.2px;top:285px;font-size:11px;color:#000;font-weight:bold;letter-spacing:0.313px;">Unidentified</span>
<span class="t" style="left:567px;top:285px;font-size:11px;color:#000;letter-spacing:-0.237px;">29600</span>
<span class="t" style="left:703px;top:285px;font-size:11px;color:#000;letter-spacing:-0.350px;">190</span>
<span class="t" style="left:832.5px;top:285px;font-size:11px;color:#000;font-weight:bold;letter-spacing:-0.163px;">-</span>
<span class="t" style="left:955.6px;top:285px;font-size:11px;color:#000;letter-spacing:-0.263px;">-</span>
<span class="t" style="left:398.7px;top:303px;font-size:11px;color:#000;letter-spacing:0.089px;">Activity Chi-square: ...</span>
<div class="a" style="left:372px;top:339px;width:721px;height:16px;background:#f0f0f0"></div>
<div class="a" style="left:390px;top:339px;width:579px;height:16px;background:#cdcdcd"></div>
<svg class="a" style="left:378px;top:342px" width="7" height="9" viewBox="0 0 7 9"><path d="M5.6 0.8L1.6 4.5L5.6 8.2" stroke="#505050" stroke-width="1.7" fill="none"/></svg>
<svg class="a" style="left:1079px;top:342px" width="7" height="9" viewBox="0 0 7 9"><path d="M1.4 0.8L5.4 4.5L1.4 8.2" stroke="#505050" stroke-width="1.7" fill="none"/></svg>
<span class="t" style="left:379.7px;top:369px;font-size:11px;color:#000;letter-spacing:-0.043px;">Chi-square: 1.258</span>
<div class="hl" style="left:372px;top:390px;width:721px;background:#a0a0a0"></div><div class="hl" style="left:372px;top:391px;width:721px;background:#fff"></div>
<div class="hl" style="left:372px;top:500px;width:721px;background:#a0a0a0"></div><div class="hl" style="left:372px;top:501px;width:721px;background:#fff"></div>
<div class="a" style="left:372px;top:398px;width:233.5px;height:102px;border:1px solid #dcdcdc;border-bottom:none;"></div><div class="a" style="left:378.1px;top:396px;width:68.69999999999999px;height:5px;background:#f0f0f0"></div><span class="t" style="left:380.1px;top:394px;font-size:11px;color:#000;letter-spacing:0.034px;">Activity units:</span>
<div class="a" style="left:604.5px;top:398px;width:146.0px;height:102px;border:1px solid #dcdcdc;border-bottom:none;"></div><div class="a" style="left:611.1px;top:396px;width:66.69999999999993px;height:5px;background:#f0f0f0"></div><span class="t" style="left:613.1px;top:394px;font-size:11px;color:#000;letter-spacing:-0.052px;">Weight units:</span>
<div class="a" style="left:749.5px;top:398px;width:344.5px;height:102px;border:1px solid #dcdcdc;border-bottom:none;border-right:none;"></div><div class="a" style="left:755.6px;top:396px;width:104.5px;height:5px;background:#f0f0f0"></div><span class="t" style="left:757.6px;top:394px;font-size:11px;color:#000;letter-spacing:-0.017px;">Calculate activity on:</span>
<span class="t" style="left:379px;top:413px;font-size:11px;color:#000;letter-spacing:0.068px;">Activity units:</span>
<div class="cmb" style="left:497px;top:407px;width:101px;height:21px"></div><svg class="a" style="left:583.5px;top:415px" width="10" height="6" viewBox="0 0 10 6"><path d="M0.6 0.6L5 5L9.4 0.6" stroke="#444" stroke-width="1.1" fill="none"/></svg>
<span class="t" style="left:500.8px;top:413px;font-size:11px;color:#000;letter-spacing:-0.877px;">Bq</span>
<span class="t" style="left:379px;top:442px;font-size:11px;color:#000;letter-spacing:-0.075px;">Specific activity:</span>
<div class="cmb" style="left:497px;top:436px;width:101px;height:21px"></div><svg class="a" style="left:583.5px;top:444px" width="10" height="6" viewBox="0 0 10 6"><path d="M0.6 0.6L5 5L9.4 0.6" stroke="#444" stroke-width="1.1" fill="none"/></svg>
<span class="t" style="left:500.8px;top:442px;font-size:11px;color:#000;letter-spacing:-0.681px;">No</span>
<span class="t" style="left:380px;top:472px;font-size:11px;color:#000;letter-spacing:-0.208px;">Sample type:</span>
<div class="cmb" style="left:497px;top:466px;width:101px;height:21px"></div><svg class="a" style="left:583.5px;top:474px" width="10" height="6" viewBox="0 0 10 6"><path d="M0.6 0.6L5 5L9.4 0.6" stroke="#444" stroke-width="1.1" fill="none"/></svg>
<span class="t" style="left:500.8px;top:472px;font-size:11px;color:#000;letter-spacing:-0.733px;">Sample</span>
<div class="cmb" style="left:625px;top:407px;width:106px;height:21px"></div><svg class="a" style="left:716.5px;top:415px" width="10" height="6" viewBox="0 0 10 6"><path d="M0.6 0.6L5 5L9.4 0.6" stroke="#444" stroke-width="1.1" fill="none"/></svg>
<span class="t" style="left:628.9px;top:413px;font-size:11px;color:#000;letter-spacing:-0.617px;">g</span>
<div class="a" style="left:757.0px;top:423.2px;width:13px;height:13px;border:1px solid #333;border-radius:50%;background:#fff"></div><div class="a" style="left:760.0px;top:426.2px;width:7px;height:7px;border-radius:50%;background:#333"></div>
<span class="t" style="left:772.8px;top:425px;font-size:11px;color:#000;letter-spacing:-0.144px;">Measurement date</span>
<div class="a" style="left:902.7px;top:423.2px;width:13px;height:13px;border:1px solid #333;border-radius:50%;background:#fff"></div>
<span class="t" style="left:918.8px;top:425px;font-size:11px;color:#000;letter-spacing:-0.395px;">Sampling begin</span>
<div class="edit" style="left:758px;top:455px;width:137px;height:21px"></div>
<svg class="a" style="left:881px;top:463px" width="10" height="6" viewBox="0 0 10 6"><path d="M0.6 0.6L5 5L9.4 0.6" stroke="#444" stroke-width="1.1" fill="none"/></svg>
<span class="t" style="left:761.1px;top:461px;font-size:11px;color:#000;letter-spacing:0.073px;">17 декабря  2008 г.</span>
<div class="edit" style="left:902px;top:455px;width:81px;height:21px"></div>
<span class="t" style="left:909.7px;top:461px;font-size:11px;color:#000;letter-spacing:0.158px;">9:37:15</span>
<div class="btn" style="left:983px;top:454px;width:102px;height:23px;"></div><span class="t" style="left:1014.2px;top:461px;font-size:11px;color:#000;letter-spacing:-0.073px;">Restore</span>
<div class="edit" style="left:380px;top:508px;width:488px;height:21px"></div>
<svg class="a" style="left:854px;top:516px" width="10" height="6" viewBox="0 0 10 6"><path d="M0.6 0.6L5 5L9.4 0.6" stroke="#444" stroke-width="1.1" fill="none"/></svg>
<span class="t" style="left:382.7px;top:513px;font-size:11px;color:#000;letter-spacing:-0.151px;">Declared nuclides report</span>
<div class="btn" style="left:874px;top:509px;width:102px;height:23px;background:#cccccc;border-color:#bfbfbf;"></div><span class="t" style="left:912.2px;top:516px;font-size:11px;color:#838383;letter-spacing:-0.243px;">Save</span>
<div class="btn" style="left:984px;top:509px;width:102px;height:23px;"></div><span class="t" style="left:1017px;top:516px;font-size:11px;color:#000;letter-spacing:0.114px;">Report</span>
<div class="a" style="left:377px;top:544px;width:13px;height:13px;border:1px solid #333;background:#fff"></div><svg class="a" style="left:377px;top:544px" width="13" height="13" viewBox="0 0 13 13"><path d="M2.6 6.4 L5.3 9.2 L10.4 3.4" stroke="#333" stroke-width="1.25" fill="none"/></svg>
<span class="t" style="left:392.6px;top:546px;font-size:11px;color:#000;letter-spacing:-0.200px;">Show unchecked and auxiliary nuclides</span>
<div class="a" style="left:631px;top:544px;width:13px;height:13px;border:1px solid #cccccc;background:#fff"></div><svg class="a" style="left:631px;top:544px" width="13" height="13" viewBox="0 0 13 13"><path d="M2.6 6.4 L5.3 9.2 L10.4 3.4" stroke="rgba(0,0,0,0)" stroke-width="1.25" fill="none"/></svg>
<span class="t" style="left:647.2px;top:546px;font-size:11px;color:#6d6d6d;letter-spacing:-0.060px;">The graph of activity dispersion for lines</span>
<div class="a" style="left:376px;top:569px;width:13px;height:13px;border:1px solid #cccccc;background:#f3f3f3"></div><svg class="a" style="left:376px;top:569px" width="13" height="13" viewBox="0 0 13 13"><path d="M2.6 6.4 L5.3 9.2 L10.4 3.4" stroke="#b4b4b4" stroke-width="1.25" fill="none"/></svg>
<span class="t" style="left:391.8px;top:571px;font-size:11px;color:#6d6d6d;letter-spacing:-0.244px;">Show nuclides on spectrum</span>
<div class="a" style="left:376px;top:593px;width:13px;height:13px;border:1px solid #cccccc;background:#f3f3f3"></div><svg class="a" style="left:376px;top:593px" width="13" height="13" viewBox="0 0 13 13"><path d="M2.6 6.4 L5.3 9.2 L10.4 3.4" stroke="#b4b4b4" stroke-width="1.25" fill="none"/></svg>
<span class="t" style="left:391.8px;top:595px;font-size:11px;color:#6d6d6d;letter-spacing:-0.286px;">Show sum on spectrum</span>
<div class="a" style="left:376px;top:617px;width:13px;height:13px;border:1px solid #cccccc;background:#fff"></div><svg class="a" style="left:376px;top:617px" width="13" height="13" viewBox="0 0 13 13"><path d="M2.6 6.4 L5.3 9.2 L10.4 3.4" stroke="rgba(0,0,0,0)" stroke-width="1.25" fill="none"/></svg>
<span class="t" style="left:391.8px;top:619px;font-size:11px;color:#6d6d6d;letter-spacing:-0.215px;">Show continuum on spectrum</span>
<div class="a" style="left:629px;top:593.5px;width:17px;height:14px;background:#808080"></div>
<svg class="a" style="left:652px;top:599.0px" width="8.4" height="4.4" viewBox="0 0 10 5"><path d="M0 0 L10 0 L5 5Z" fill="#9a9a9a"/></svg>
<div class="a" style="left:629px;top:618px;width:17px;height:14px;background:#808080"></div>
<svg class="a" style="left:652px;top:623.5px" width="8.4" height="4.4" viewBox="0 0 10 5"><path d="M0 0 L10 0 L5 5Z" fill="#9a9a9a"/></svg>
<div class="btn" style="left:907px;top:613px;width:178px;height:23px;"></div><span class="t" style="left:932.1px;top:620px;font-size:11px;color:#000;letter-spacing:-0.052px;">Expert identification mode</span>
<div class="btn" style="left:379px;top:645px;width:140px;height:23px;"></div><span class="t" style="left:418.1px;top:652px;font-size:11px;color:#000;letter-spacing:-0.215px;">Expand lines</span>
<div class="btn" style="left:526px;top:645px;width:140px;height:23px;"></div><span class="t" style="left:553.5px;top:652px;font-size:11px;color:#000;letter-spacing:-0.266px;">Select all nuclides</span>
<div class="btn" style="left:674px;top:645px;width:140px;height:23px;"></div><span class="t" style="left:703.3px;top:652px;font-size:11px;color:#000;letter-spacing:-0.083px;">Retry calculation</span>
<div class="btn" style="left:822px;top:645px;width:95px;height:23px;"></div><span class="t" style="left:827.9px;top:652px;font-size:11px;color:#000;letter-spacing:-0.220px;">Go one step back</span>
<div class="btn" style="left:979px;top:645px;width:107px;height:23px;"></div><span class="t" style="left:1018.5px;top:652px;font-size:11px;color:#000;letter-spacing:-0.564px;">Close</span>
</body></html>
